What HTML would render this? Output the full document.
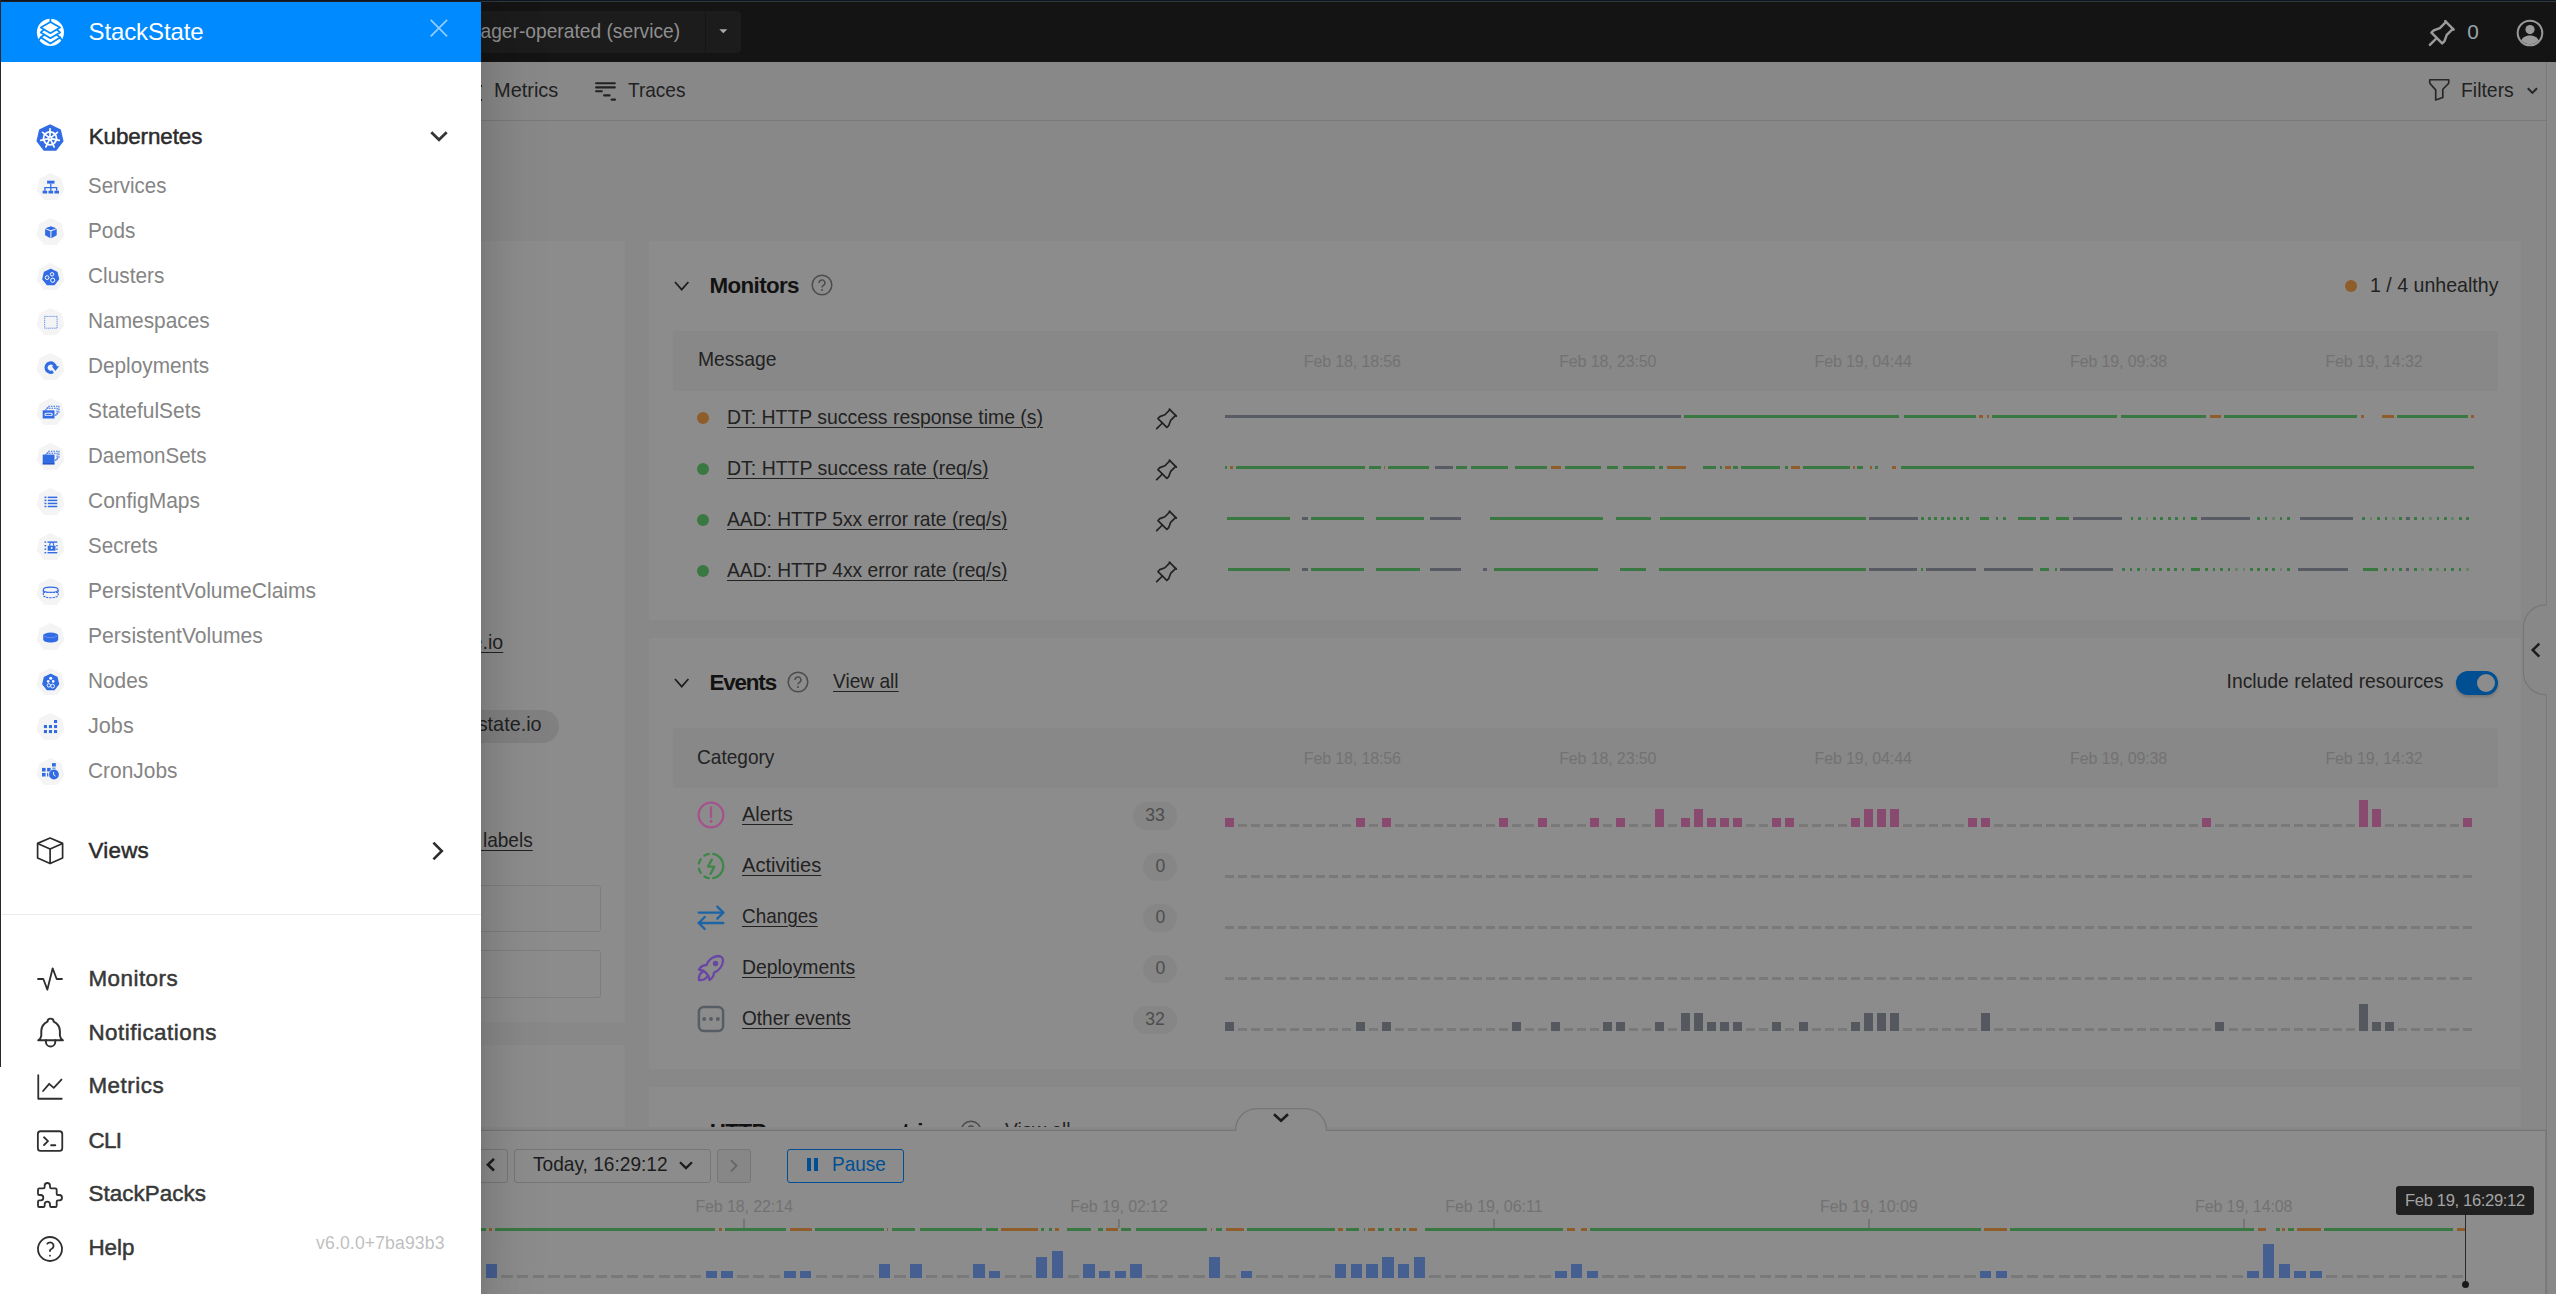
<!DOCTYPE html>
<html lang="en"><head><meta charset="utf-8"><title>StackState</title><style>
html,body{margin:0;padding:0;}
html{overflow:hidden;width:2556px;height:1294px;}
body{width:2556px;height:1294px;overflow:hidden;position:relative;background:#888888;font-family:"Liberation Sans", sans-serif;}
.b{position:absolute;display:block;}
.t{position:absolute;white-space:nowrap;line-height:1;}
.u{text-decoration:underline;text-decoration-thickness:1.6px;text-underline-offset:3px;}
</style></head><body>
<div class="b" style="left:0.00px;top:0.00px;width:2556.00px;height:62.00px;background:#141414;"></div>
<div class="b" style="left:0.00px;top:0.00px;width:2556.00px;height:1.00px;background:#0a1726;"></div>
<div class="b" style="left:0.00px;top:1.00px;width:2556.00px;height:1.00px;background:#363636;"></div>
<div class="b" style="left:300.00px;top:11.00px;width:440.50px;height:42.00px;background:#1c1c1c;border-radius:4px;"></div>
<div class="b" style="left:705.00px;top:11.00px;width:1.00px;height:42.00px;background:#151515;"></div>
<span class="t" style="top:20.99px;font-size:20.8px;color:#8f8f8f;right:1875.50px;transform:scaleX(0.9232);transform-origin:100% 0;">alertmanager-operated (service)</span>
<svg class="b" style="left:718.00px;top:28.20px;" width="12" height="7" viewBox="0 0 12 7"><path d="M1.300 1.200h8l-4 4z" fill="#aaaaaa"/></svg>
<svg class="b" style="left:2422.50px;top:14.60px;" width="36.8" height="36.8" viewBox="0 0 24 24"><g fill="none" stroke="#9b9b9b" stroke-width="1.6" stroke-linecap="round" stroke-linejoin="round"><path d="M15 4.5l-4 4l-4 1.5l-1.5 1.5l7 7l1.5 -1.5l1.5 -4l4 -4"/><path d="M9 15l-4.5 4.5"/><path d="M14.5 4l5.5 5.5"/></g></svg>
<span class="t" style="top:21.79px;font-size:20.8px;color:#9aa3ad;letter-spacing:0.125px;left:2467.30px;">0</span>
<svg class="b" style="left:2515.50px;top:19.00px;" width="28" height="28" viewBox="0 0 28 28"><circle cx="14" cy="14" r="12.3" fill="none" stroke="#9a9a9a" stroke-width="2"/><circle cx="14" cy="10.6" r="4.6" fill="#9a9a9a"/><path d="M5.2 21.6c1.6-3.6 5-5 8.8-5s7.2 1.4 8.8 5a12.3 12.3 0 0 1-17.6 0z" fill="#9a9a9a"/></svg>
<div class="b" style="left:0.00px;top:120.00px;width:2546.00px;height:1.00px;background:#7a7a7a;"></div>
<div class="b" style="left:2546.00px;top:62.00px;width:1.00px;height:1232.00px;background:#797979;"></div>
<span class="t" style="top:79.59px;font-size:20.8px;color:#222222;left:494.10px;transform:scaleX(0.9599);transform-origin:0 0;">Metrics</span>
<div class="b" style="left:481.00px;top:85.00px;width:1.20px;height:2.40px;background:#1c1c1c;"></div>
<div class="b" style="left:481.00px;top:99.00px;width:1.20px;height:2.40px;background:#1c1c1c;"></div>
<svg class="b" style="left:594.00px;top:81.00px;" width="24" height="21" viewBox="0 0 24 21"><g stroke="#222" stroke-width="2.1" stroke-linecap="round" fill="none"><path d="M2.1 2.300H20.800"/><path d="M2.100 6.400H20.800"/><path d="M2.100 10.200H7.800"/><path d="M10.100 14.400H15.600"/><path d="M17.600 18.600H21"/></g></svg>
<span class="t" style="top:79.59px;font-size:20.8px;color:#222222;left:628.30px;transform:scaleX(0.9147);transform-origin:0 0;">Traces</span>
<svg class="b" style="left:2424.60px;top:75.30px;" width="28.5" height="28.5" viewBox="0 0 24 24"><g fill="none" stroke="#262626" stroke-width="1.4" stroke-linejoin="round"><path d="M4 4h16v2.172a2 2 0 0 1 -.586 1.414l-4.414 4.414v7l-6 2v-8.5l-4.644 -5.108a2 2 0 0 1 -.356 -1.142v-2.25z"/></g></svg>
<span class="t" style="top:80.19px;font-size:20.8px;color:#222222;left:2461.40px;transform:scaleX(0.9324);transform-origin:0 0;">Filters</span>
<svg class="b" style="left:2526.00px;top:86.00px;" width="13" height="10" viewBox="0 0 13 10"><path d="M1.8 2.3l4.6 4.6l4.6-4.6" fill="none" stroke="#262626" stroke-width="2"/></svg>
<div class="b" style="left:300.00px;top:241.00px;width:325.00px;height:781.00px;background:#8c8c8c;border-radius:2px;"></div>
<div class="b" style="left:300.00px;top:1045.00px;width:325.00px;height:120.00px;background:#8c8c8c;border-radius:2px;"></div>
<span class="t" style="top:632.49px;font-size:20.8px;color:#222222;right:2052.50px;transform:scaleX(0.9417);transform-origin:100% 0;text-decoration:underline;text-decoration-thickness:1.25px;text-underline-offset:2.6px;">prometheus.stackstate.io</span>
<div class="b" style="left:330.00px;top:710.00px;width:229.00px;height:33.00px;background:#808080;border-radius:17px;"></div>
<span class="t" style="top:714.49px;font-size:20.8px;color:#222222;right:2014.50px;transform:scaleX(0.9527);transform-origin:100% 0;">stackstate.io</span>
<span class="t" style="top:830.49px;font-size:20.8px;color:#222222;right:2023.50px;transform:scaleX(0.9171);transform-origin:100% 0;text-decoration:underline;text-decoration-thickness:1.25px;text-underline-offset:2.6px;">Show all labels</span>
<div class="b" style="left:300.00px;top:884.50px;width:300.50px;height:47.00px;border:1px solid #7e7e7e;border-radius:3px;box-sizing:border-box;"></div>
<div class="b" style="left:300.00px;top:950.00px;width:300.50px;height:47.50px;border:1px solid #7e7e7e;border-radius:3px;box-sizing:border-box;"></div>
<div class="b" style="left:649.30px;top:241.00px;width:1872.20px;height:379.00px;background:#8c8c8c;border-radius:2px;"></div>
<div class="b" style="left:649.30px;top:638.00px;width:1872.20px;height:431.00px;background:#8c8c8c;border-radius:2px;"></div>
<div class="b" style="left:649.30px;top:1087.00px;width:1872.20px;height:80.00px;background:#8c8c8c;border-radius:2px;"></div>
<svg class="b" style="left:674.00px;top:281.00px;" width="16" height="11" viewBox="0 0 16 11"><path d="M1 1l6.7 7.6l6.7-7.6" fill="none" stroke="#1c1c1c" stroke-width="1.7"/></svg>
<span class="t" style="top:275.44px;font-size:22.4px;color:#121212;font-weight:700;letter-spacing:-0.641px;left:709.50px;">Monitors</span>
<svg class="b" style="left:811.00px;top:274.00px;" width="22" height="22" viewBox="0 0 22 22"><circle cx="11" cy="11" r="9.8" fill="none" stroke="#4c4c4c" stroke-width="1.5"/><path d="M8.1 8.9a2.9 2.9 0 1 1 4.3 2.5c-1 .6-1.4 1.1-1.4 2.1" fill="none" stroke="#4c4c4c" stroke-width="1.5"/><circle cx="11" cy="15.9" r="1" fill="#4c4c4c"/></svg>
<div class="b" style="left:2344.90px;top:279.90px;width:12.20px;height:12.20px;background:#8e5d29;border-radius:50%;"></div>
<span class="t" style="top:274.99px;font-size:20.8px;color:#222222;right:58.00px;transform:scaleX(0.9417);transform-origin:100% 0;">1 / 4 unhealthy</span>
<div class="b" style="left:673.00px;top:331.00px;width:1825.00px;height:59.50px;background:#888888;border-radius:3px;"></div>
<span class="t" style="top:349.49px;font-size:20.8px;color:#222222;left:697.50px;transform:scaleX(0.9290);transform-origin:0 0;">Message</span>
<span class="t" style="top:354.26px;font-size:16px;color:#727272;letter-spacing:-0.127px;left:1303.80px;">Feb 18, 18:56</span>
<span class="t" style="top:354.26px;font-size:16px;color:#727272;letter-spacing:-0.127px;left:1559.20px;">Feb 18, 23:50</span>
<span class="t" style="top:354.26px;font-size:16px;color:#727272;letter-spacing:-0.127px;left:1814.60px;">Feb 19, 04:44</span>
<span class="t" style="top:354.26px;font-size:16px;color:#727272;letter-spacing:-0.127px;left:2070.00px;">Feb 19, 09:38</span>
<span class="t" style="top:354.26px;font-size:16px;color:#727272;letter-spacing:-0.127px;left:2325.40px;">Feb 19, 14:32</span>
<div class="b" style="left:696.80px;top:411.80px;width:12.30px;height:12.30px;background:#8e5d29;border-radius:50%;"></div>
<span class="t" style="top:406.99px;font-size:20.8px;color:#222222;left:727.20px;transform:scaleX(0.9343);transform-origin:0 0;text-decoration:underline;text-decoration-thickness:1.25px;text-underline-offset:2.6px;">DT: HTTP success response time (s)</span>
<svg class="b" style="left:1150.90px;top:404.20px;" width="30.4" height="30.4" viewBox="0 0 24 24"><g fill="none" stroke="#222" stroke-width="1.35" stroke-linecap="round" stroke-linejoin="round"><path d="M15 4.5l-4 4l-4 1.5l-1.5 1.5l7 7l1.5 -1.5l1.5 -4l4 -4"/><path d="M9 15l-4.5 4.5"/><path d="M14.5 4l5.5 5.5"/></g></svg>
<div class="b" style="left:696.80px;top:462.80px;width:12.30px;height:12.30px;background:#3a7841;border-radius:50%;"></div>
<span class="t" style="top:457.99px;font-size:20.8px;color:#222222;left:727.20px;transform:scaleX(0.9367);transform-origin:0 0;text-decoration:underline;text-decoration-thickness:1.25px;text-underline-offset:2.6px;">DT: HTTP success rate (req/s)</span>
<svg class="b" style="left:1150.90px;top:455.20px;" width="30.4" height="30.4" viewBox="0 0 24 24"><g fill="none" stroke="#222" stroke-width="1.35" stroke-linecap="round" stroke-linejoin="round"><path d="M15 4.5l-4 4l-4 1.5l-1.5 1.5l7 7l1.5 -1.5l1.5 -4l4 -4"/><path d="M9 15l-4.5 4.5"/><path d="M14.5 4l5.5 5.5"/></g></svg>
<div class="b" style="left:696.80px;top:513.80px;width:12.30px;height:12.30px;background:#3a7841;border-radius:50%;"></div>
<span class="t" style="top:508.99px;font-size:20.8px;color:#222222;left:727.20px;transform:scaleX(0.9237);transform-origin:0 0;text-decoration:underline;text-decoration-thickness:1.25px;text-underline-offset:2.6px;">AAD: HTTP 5xx error rate (req/s)</span>
<svg class="b" style="left:1150.90px;top:506.20px;" width="30.4" height="30.4" viewBox="0 0 24 24"><g fill="none" stroke="#222" stroke-width="1.35" stroke-linecap="round" stroke-linejoin="round"><path d="M15 4.5l-4 4l-4 1.5l-1.5 1.5l7 7l1.5 -1.5l1.5 -4l4 -4"/><path d="M9 15l-4.5 4.5"/><path d="M14.5 4l5.5 5.5"/></g></svg>
<div class="b" style="left:696.80px;top:564.80px;width:12.30px;height:12.30px;background:#3a7841;border-radius:50%;"></div>
<span class="t" style="top:559.99px;font-size:20.8px;color:#222222;left:727.20px;transform:scaleX(0.9237);transform-origin:0 0;text-decoration:underline;text-decoration-thickness:1.25px;text-underline-offset:2.6px;">AAD: HTTP 4xx error rate (req/s)</span>
<svg class="b" style="left:1150.90px;top:557.20px;" width="30.4" height="30.4" viewBox="0 0 24 24"><g fill="none" stroke="#222" stroke-width="1.35" stroke-linecap="round" stroke-linejoin="round"><path d="M15 4.5l-4 4l-4 1.5l-1.5 1.5l7 7l1.5 -1.5l1.5 -4l4 -4"/><path d="M9 15l-4.5 4.5"/><path d="M14.5 4l5.5 5.5"/></g></svg>
<div class="b" style="left:1225.00px;top:415.00px;width:456.10px;height:3.00px;background:#585b64;"></div>
<div class="b" style="left:1684.40px;top:415.00px;width:214.60px;height:3.00px;background:#3a7841;"></div>
<div class="b" style="left:1903.80px;top:415.00px;width:72.40px;height:3.00px;background:#3a7841;"></div>
<div class="b" style="left:1979.30px;top:415.00px;width:3.40px;height:3.00px;background:#8e5d29;"></div>
<div class="b" style="left:1987.10px;top:415.00px;width:2.30px;height:3.00px;background:#8e5d29;"></div>
<div class="b" style="left:1992.40px;top:415.00px;width:124.30px;height:3.00px;background:#3a7841;"></div>
<div class="b" style="left:2121.20px;top:415.00px;width:85.20px;height:3.00px;background:#3a7841;"></div>
<div class="b" style="left:2209.60px;top:415.00px;width:11.40px;height:3.00px;background:#8e5d29;"></div>
<div class="b" style="left:2224.20px;top:415.00px;width:133.30px;height:3.00px;background:#3a7841;"></div>
<div class="b" style="left:2360.70px;top:415.00px;width:3.20px;height:3.00px;background:#8e5d29;"></div>
<div class="b" style="left:2382.20px;top:415.00px;width:12.00px;height:3.00px;background:#8e5d29;"></div>
<div class="b" style="left:2397.40px;top:415.00px;width:70.20px;height:3.00px;background:#3a7841;"></div>
<div class="b" style="left:2470.60px;top:415.00px;width:3.20px;height:3.00px;background:#8e5d29;"></div>
<div class="b" style="left:1225.30px;top:466.00px;width:1.80px;height:3.00px;background:#3a7841;"></div>
<div class="b" style="left:1229.80px;top:466.00px;width:3.50px;height:3.00px;background:#8e5d29;"></div>
<div class="b" style="left:1236.20px;top:466.00px;width:128.70px;height:3.00px;background:#3a7841;"></div>
<div class="b" style="left:1369.20px;top:466.00px;width:12.00px;height:3.00px;background:#3a7841;"></div>
<div class="b" style="left:1384.40px;top:466.00px;width:1.00px;height:3.00px;background:#8e5d29;"></div>
<div class="b" style="left:1388.40px;top:466.00px;width:40.70px;height:3.00px;background:#3a7841;"></div>
<div class="b" style="left:1434.90px;top:466.00px;width:17.80px;height:3.00px;background:#585b64;"></div>
<div class="b" style="left:1455.90px;top:466.00px;width:11.50px;height:3.00px;background:#3a7841;"></div>
<div class="b" style="left:1471.40px;top:466.00px;width:36.70px;height:3.00px;background:#3a7841;"></div>
<div class="b" style="left:1514.70px;top:466.00px;width:32.80px;height:3.00px;background:#3a7841;"></div>
<div class="b" style="left:1550.60px;top:466.00px;width:10.70px;height:3.00px;background:#8e5d29;"></div>
<div class="b" style="left:1564.50px;top:466.00px;width:36.40px;height:3.00px;background:#3a7841;"></div>
<div class="b" style="left:1606.80px;top:466.00px;width:11.40px;height:3.00px;background:#3a7841;"></div>
<div class="b" style="left:1622.70px;top:466.00px;width:32.20px;height:3.00px;background:#3a7841;"></div>
<div class="b" style="left:1658.90px;top:466.00px;width:4.50px;height:3.00px;background:#3a7841;"></div>
<div class="b" style="left:1666.60px;top:466.00px;width:19.70px;height:3.00px;background:#8e5d29;"></div>
<div class="b" style="left:1702.80px;top:466.00px;width:12.80px;height:3.00px;background:#3a7841;"></div>
<div class="b" style="left:1720.10px;top:466.00px;width:1.90px;height:3.00px;background:#3a7841;"></div>
<div class="b" style="left:1724.60px;top:466.00px;width:6.20px;height:3.00px;background:#8e5d29;"></div>
<div class="b" style="left:1733.40px;top:466.00px;width:4.50px;height:3.00px;background:#3a7841;"></div>
<div class="b" style="left:1741.40px;top:466.00px;width:38.60px;height:3.00px;background:#3a7841;"></div>
<div class="b" style="left:1785.30px;top:466.00px;width:2.70px;height:3.00px;background:#3a7841;"></div>
<div class="b" style="left:1790.90px;top:466.00px;width:9.00px;height:3.00px;background:#8e5d29;"></div>
<div class="b" style="left:1803.10px;top:466.00px;width:47.40px;height:3.00px;background:#3a7841;"></div>
<div class="b" style="left:1853.10px;top:466.00px;width:1.90px;height:3.00px;background:#8e5d29;"></div>
<div class="b" style="left:1857.10px;top:466.00px;width:6.40px;height:3.00px;background:#3a7841;"></div>
<div class="b" style="left:1869.50px;top:466.00px;width:2.80px;height:3.00px;background:#8e5d29;"></div>
<div class="b" style="left:1875.20px;top:466.00px;width:2.40px;height:3.00px;background:#3a7841;"></div>
<div class="b" style="left:1891.90px;top:466.00px;width:4.00px;height:3.00px;background:#8e5d29;"></div>
<div class="b" style="left:1900.70px;top:466.00px;width:573.10px;height:3.00px;background:#3a7841;"></div>
<div class="b" style="left:1226.60px;top:517.00px;width:63.10px;height:3.00px;background:#3a7841;"></div>
<div class="b" style="left:1302.40px;top:517.00px;width:5.30px;height:3.00px;background:#585b64;"></div>
<div class="b" style="left:1310.90px;top:517.00px;width:52.70px;height:3.00px;background:#3a7841;"></div>
<div class="b" style="left:1375.90px;top:517.00px;width:48.60px;height:3.00px;background:#3a7841;"></div>
<div class="b" style="left:1429.60px;top:517.00px;width:31.10px;height:3.00px;background:#585b64;"></div>
<div class="b" style="left:1489.50px;top:517.00px;width:113.60px;height:3.00px;background:#3a7841;"></div>
<div class="b" style="left:1616.40px;top:517.00px;width:34.50px;height:3.00px;background:#3a7841;"></div>
<div class="b" style="left:1660.30px;top:517.00px;width:205.60px;height:3.00px;background:#3a7841;"></div>
<div class="b" style="left:1869.20px;top:517.00px;width:48.80px;height:3.00px;background:#585b64;"></div>
<div class="b" style="left:1980.30px;top:517.00px;width:8.70px;height:3.00px;background:#3a7841;"></div>
<div class="b" style="left:2017.80px;top:517.00px;width:17.80px;height:3.00px;background:#3a7841;"></div>
<div class="b" style="left:2040.40px;top:517.00px;width:9.00px;height:3.00px;background:#3a7841;"></div>
<div class="b" style="left:2055.50px;top:517.00px;width:13.90px;height:3.00px;background:#3a7841;"></div>
<div class="b" style="left:2072.80px;top:517.00px;width:49.30px;height:3.00px;background:#585b64;"></div>
<div class="b" style="left:2191.20px;top:517.00px;width:6.10px;height:3.00px;background:#3a7841;"></div>
<div class="b" style="left:2200.50px;top:517.00px;width:49.30px;height:3.00px;background:#585b64;"></div>
<div class="b" style="left:2299.50px;top:517.00px;width:53.20px;height:3.00px;background:#585b64;"></div>
<div class="b" style="left:1921.20px;top:517.00px;width:3.00px;height:3.00px;background:#3a7841;"></div>
<div class="b" style="left:1927.65px;top:517.00px;width:3.00px;height:3.00px;background:#3a7841;"></div>
<div class="b" style="left:1934.10px;top:517.00px;width:3.00px;height:3.00px;background:#3a7841;"></div>
<div class="b" style="left:1940.55px;top:517.00px;width:3.00px;height:3.00px;background:#3a7841;"></div>
<div class="b" style="left:1947.00px;top:517.00px;width:3.00px;height:3.00px;background:#3a7841;"></div>
<div class="b" style="left:1953.45px;top:517.00px;width:3.00px;height:3.00px;background:#3a7841;"></div>
<div class="b" style="left:1959.90px;top:517.00px;width:3.00px;height:3.00px;background:#3a7841;"></div>
<div class="b" style="left:1966.35px;top:517.00px;width:3.00px;height:3.00px;background:#3a7841;"></div>
<div class="b" style="left:1995.70px;top:517.00px;width:2.60px;height:3.00px;background:#3a7841;"></div>
<div class="b" style="left:2003.30px;top:517.00px;width:2.60px;height:3.00px;background:#3a7841;"></div>
<div class="b" style="left:2130.60px;top:517.00px;width:2.70px;height:3.00px;background:#3a7841;"></div>
<div class="b" style="left:2138.05px;top:517.00px;width:2.70px;height:3.00px;background:#3a7841;"></div>
<div class="b" style="left:2145.50px;top:517.00px;width:2.70px;height:3.00px;background:#3a7841;opacity:.45;"></div>
<div class="b" style="left:2152.95px;top:517.00px;width:2.70px;height:3.00px;background:#3a7841;"></div>
<div class="b" style="left:2160.40px;top:517.00px;width:2.70px;height:3.00px;background:#3a7841;"></div>
<div class="b" style="left:2167.85px;top:517.00px;width:2.70px;height:3.00px;background:#3a7841;"></div>
<div class="b" style="left:2175.30px;top:517.00px;width:2.70px;height:3.00px;background:#3a7841;"></div>
<div class="b" style="left:2182.75px;top:517.00px;width:2.70px;height:3.00px;background:#3a7841;"></div>
<div class="b" style="left:2257.20px;top:517.00px;width:2.70px;height:3.00px;background:#3a7841;"></div>
<div class="b" style="left:2264.65px;top:517.00px;width:2.70px;height:3.00px;background:#3a7841;"></div>
<div class="b" style="left:2272.10px;top:517.00px;width:2.70px;height:3.00px;background:#3a7841;opacity:.45;"></div>
<div class="b" style="left:2279.55px;top:517.00px;width:2.70px;height:3.00px;background:#3a7841;"></div>
<div class="b" style="left:2287.00px;top:517.00px;width:2.70px;height:3.00px;background:#3a7841;"></div>
<div class="b" style="left:2362.30px;top:517.00px;width:2.70px;height:3.00px;background:#3a7841;"></div>
<div class="b" style="left:2369.73px;top:517.00px;width:2.70px;height:3.00px;background:#3a7841;opacity:.45;"></div>
<div class="b" style="left:2377.16px;top:517.00px;width:2.70px;height:3.00px;background:#3a7841;"></div>
<div class="b" style="left:2384.59px;top:517.00px;width:2.70px;height:3.00px;background:#3a7841;"></div>
<div class="b" style="left:2392.02px;top:517.00px;width:2.70px;height:3.00px;background:#3a7841;opacity:.45;"></div>
<div class="b" style="left:2399.45px;top:517.00px;width:2.70px;height:3.00px;background:#3a7841;"></div>
<div class="b" style="left:2406.88px;top:517.00px;width:2.70px;height:3.00px;background:#3a7841;"></div>
<div class="b" style="left:2414.31px;top:517.00px;width:2.70px;height:3.00px;background:#3a7841;"></div>
<div class="b" style="left:2421.74px;top:517.00px;width:2.70px;height:3.00px;background:#3a7841;"></div>
<div class="b" style="left:2429.17px;top:517.00px;width:2.70px;height:3.00px;background:#3a7841;opacity:.45;"></div>
<div class="b" style="left:2436.60px;top:517.00px;width:2.70px;height:3.00px;background:#3a7841;"></div>
<div class="b" style="left:2444.03px;top:517.00px;width:2.70px;height:3.00px;background:#3a7841;"></div>
<div class="b" style="left:2451.46px;top:517.00px;width:2.70px;height:3.00px;background:#3a7841;opacity:.45;"></div>
<div class="b" style="left:2458.89px;top:517.00px;width:2.70px;height:3.00px;background:#3a7841;"></div>
<div class="b" style="left:2466.32px;top:517.00px;width:2.70px;height:3.00px;background:#3a7841;"></div>
<div class="b" style="left:2406.30px;top:517.00px;width:2.80px;height:3.00px;background:#585b64;"></div>
<div class="b" style="left:1227.90px;top:568.00px;width:61.80px;height:3.00px;background:#3a7841;"></div>
<div class="b" style="left:1302.40px;top:568.00px;width:5.30px;height:3.00px;background:#585b64;"></div>
<div class="b" style="left:1310.90px;top:568.00px;width:52.70px;height:3.00px;background:#3a7841;"></div>
<div class="b" style="left:1375.90px;top:568.00px;width:44.10px;height:3.00px;background:#3a7841;"></div>
<div class="b" style="left:1429.60px;top:568.00px;width:31.10px;height:3.00px;background:#585b64;"></div>
<div class="b" style="left:1482.80px;top:568.00px;width:4.00px;height:3.00px;background:#585b64;"></div>
<div class="b" style="left:1494.20px;top:568.00px;width:104.30px;height:3.00px;background:#3a7841;"></div>
<div class="b" style="left:1619.80px;top:568.00px;width:25.80px;height:3.00px;background:#3a7841;"></div>
<div class="b" style="left:1658.90px;top:568.00px;width:207.00px;height:3.00px;background:#3a7841;"></div>
<div class="b" style="left:1869.20px;top:568.00px;width:48.30px;height:3.00px;background:#585b64;"></div>
<div class="b" style="left:1920.70px;top:568.00px;width:2.30px;height:3.00px;background:#3a7841;"></div>
<div class="b" style="left:1925.70px;top:568.00px;width:50.00px;height:3.00px;background:#585b64;"></div>
<div class="b" style="left:1983.70px;top:568.00px;width:49.20px;height:3.00px;background:#585b64;"></div>
<div class="b" style="left:2040.40px;top:568.00px;width:9.00px;height:3.00px;background:#3a7841;"></div>
<div class="b" style="left:2055.00px;top:568.00px;width:1.90px;height:3.00px;background:#3a7841;"></div>
<div class="b" style="left:2060.00px;top:568.00px;width:52.70px;height:3.00px;background:#585b64;"></div>
<div class="b" style="left:2190.70px;top:568.00px;width:9.80px;height:3.00px;background:#3a7841;"></div>
<div class="b" style="left:2298.40px;top:568.00px;width:49.30px;height:3.00px;background:#585b64;"></div>
<div class="b" style="left:2362.80px;top:568.00px;width:15.50px;height:3.00px;background:#3a7841;"></div>
<div class="b" style="left:2122.20px;top:568.00px;width:2.70px;height:3.00px;background:#3a7841;"></div>
<div class="b" style="left:2129.65px;top:568.00px;width:2.70px;height:3.00px;background:#3a7841;"></div>
<div class="b" style="left:2137.10px;top:568.00px;width:2.70px;height:3.00px;background:#3a7841;"></div>
<div class="b" style="left:2144.55px;top:568.00px;width:2.70px;height:3.00px;background:#3a7841;opacity:.45;"></div>
<div class="b" style="left:2152.00px;top:568.00px;width:2.70px;height:3.00px;background:#3a7841;"></div>
<div class="b" style="left:2159.45px;top:568.00px;width:2.70px;height:3.00px;background:#3a7841;"></div>
<div class="b" style="left:2166.90px;top:568.00px;width:2.70px;height:3.00px;background:#3a7841;"></div>
<div class="b" style="left:2174.35px;top:568.00px;width:2.70px;height:3.00px;background:#3a7841;"></div>
<div class="b" style="left:2181.80px;top:568.00px;width:2.70px;height:3.00px;background:#3a7841;"></div>
<div class="b" style="left:2205.30px;top:568.00px;width:2.70px;height:3.00px;background:#3a7841;"></div>
<div class="b" style="left:2212.75px;top:568.00px;width:2.70px;height:3.00px;background:#3a7841;"></div>
<div class="b" style="left:2220.20px;top:568.00px;width:2.70px;height:3.00px;background:#3a7841;"></div>
<div class="b" style="left:2227.65px;top:568.00px;width:2.70px;height:3.00px;background:#3a7841;"></div>
<div class="b" style="left:2235.10px;top:568.00px;width:2.70px;height:3.00px;background:#3a7841;opacity:.45;"></div>
<div class="b" style="left:2242.55px;top:568.00px;width:2.70px;height:3.00px;background:#3a7841;opacity:.45;"></div>
<div class="b" style="left:2250.00px;top:568.00px;width:2.70px;height:3.00px;background:#3a7841;"></div>
<div class="b" style="left:2257.45px;top:568.00px;width:2.70px;height:3.00px;background:#3a7841;"></div>
<div class="b" style="left:2264.90px;top:568.00px;width:2.70px;height:3.00px;background:#3a7841;"></div>
<div class="b" style="left:2272.35px;top:568.00px;width:2.70px;height:3.00px;background:#3a7841;"></div>
<div class="b" style="left:2279.80px;top:568.00px;width:2.70px;height:3.00px;background:#3a7841;opacity:.45;"></div>
<div class="b" style="left:2287.25px;top:568.00px;width:2.70px;height:3.00px;background:#3a7841;"></div>
<div class="b" style="left:2384.20px;top:568.00px;width:2.70px;height:3.00px;background:#3a7841;"></div>
<div class="b" style="left:2391.65px;top:568.00px;width:2.70px;height:3.00px;background:#3a7841;"></div>
<div class="b" style="left:2399.10px;top:568.00px;width:2.70px;height:3.00px;background:#3a7841;"></div>
<div class="b" style="left:2406.55px;top:568.00px;width:2.70px;height:3.00px;background:#3a7841;"></div>
<div class="b" style="left:2414.00px;top:568.00px;width:2.70px;height:3.00px;background:#3a7841;"></div>
<div class="b" style="left:2421.45px;top:568.00px;width:2.70px;height:3.00px;background:#3a7841;opacity:.45;"></div>
<div class="b" style="left:2428.90px;top:568.00px;width:2.70px;height:3.00px;background:#3a7841;"></div>
<div class="b" style="left:2436.35px;top:568.00px;width:2.70px;height:3.00px;background:#3a7841;opacity:.45;"></div>
<div class="b" style="left:2443.80px;top:568.00px;width:2.70px;height:3.00px;background:#3a7841;"></div>
<div class="b" style="left:2451.25px;top:568.00px;width:2.70px;height:3.00px;background:#3a7841;"></div>
<div class="b" style="left:2458.70px;top:568.00px;width:2.70px;height:3.00px;background:#3a7841;"></div>
<div class="b" style="left:2466.15px;top:568.00px;width:2.70px;height:3.00px;background:#3a7841;opacity:.45;"></div>
<div class="b" style="left:2406.30px;top:568.00px;width:2.80px;height:3.00px;background:#585b64;"></div>
<svg class="b" style="left:674.00px;top:678.00px;" width="16" height="11" viewBox="0 0 16 11"><path d="M1 1l6.7 7.6l6.7-7.6" fill="none" stroke="#1c1c1c" stroke-width="1.7"/></svg>
<span class="t" style="top:672.44px;font-size:22.4px;color:#121212;font-weight:700;letter-spacing:-1.140px;left:709.40px;">Events</span>
<svg class="b" style="left:787.00px;top:671.00px;" width="22" height="22" viewBox="0 0 22 22"><circle cx="11" cy="11" r="9.8" fill="none" stroke="#4c4c4c" stroke-width="1.5"/><path d="M8.1 8.9a2.9 2.9 0 1 1 4.3 2.5c-1 .6-1.4 1.1-1.4 2.1" fill="none" stroke="#4c4c4c" stroke-width="1.5"/><circle cx="11" cy="15.9" r="1" fill="#4c4c4c"/></svg>
<span class="t" style="top:671.19px;font-size:20.8px;color:#222222;left:833.30px;transform:scaleX(0.9201);transform-origin:0 0;text-decoration:underline;text-decoration-thickness:1.25px;text-underline-offset:2.6px;">View all</span>
<span class="t" style="top:671.19px;font-size:20.8px;color:#222222;right:112.70px;transform:scaleX(0.9292);transform-origin:100% 0;">Include related resources</span>
<div class="b" style="left:2456.00px;top:670.70px;width:42.00px;height:24.40px;background:#004f93;border-radius:13px;box-shadow:0 2px 3px rgba(0,0,0,.18);"></div>
<div class="b" style="left:2477.10px;top:673.90px;width:18.00px;height:18.00px;background:#8c8c8c;border-radius:50%;"></div>
<div class="b" style="left:673.00px;top:728.00px;width:1825.00px;height:59.50px;background:#888888;border-radius:3px;"></div>
<span class="t" style="top:746.99px;font-size:20.8px;color:#222222;left:697.30px;transform:scaleX(0.9172);transform-origin:0 0;">Category</span>
<span class="t" style="top:751.06px;font-size:16px;color:#727272;letter-spacing:-0.127px;left:1303.80px;">Feb 18, 18:56</span>
<span class="t" style="top:751.06px;font-size:16px;color:#727272;letter-spacing:-0.127px;left:1559.20px;">Feb 18, 23:50</span>
<span class="t" style="top:751.06px;font-size:16px;color:#727272;letter-spacing:-0.127px;left:1814.60px;">Feb 19, 04:44</span>
<span class="t" style="top:751.06px;font-size:16px;color:#727272;letter-spacing:-0.127px;left:2070.00px;">Feb 19, 09:38</span>
<span class="t" style="top:751.06px;font-size:16px;color:#727272;letter-spacing:-0.127px;left:2325.40px;">Feb 19, 14:32</span>
<span class="t" style="top:803.79px;font-size:20.8px;color:#222222;left:742.20px;transform:scaleX(0.9554);transform-origin:0 0;text-decoration:underline;text-decoration-thickness:1.25px;text-underline-offset:2.6px;">Alerts</span>
<div class="b" style="left:1133.00px;top:802.00px;width:44.00px;height:27.60px;background:#868686;border-radius:14px;"></div>
<span class="t" style="top:807.20px;font-size:17.6px;color:#4d4d4d;letter-spacing:-0.189px;left:1145.30px;">33</span>
<span class="t" style="top:854.79px;font-size:20.8px;color:#222222;left:742.20px;transform:scaleX(0.9663);transform-origin:0 0;text-decoration:underline;text-decoration-thickness:1.25px;text-underline-offset:2.6px;">Activities</span>
<div class="b" style="left:1143.00px;top:853.00px;width:34.00px;height:27.60px;background:#868686;border-radius:14px;"></div>
<span class="t" style="top:858.20px;font-size:17.6px;color:#4d4d4d;letter-spacing:0.094px;left:1155.60px;">0</span>
<span class="t" style="top:905.79px;font-size:20.8px;color:#222222;left:742.20px;transform:scaleX(0.9081);transform-origin:0 0;text-decoration:underline;text-decoration-thickness:1.25px;text-underline-offset:2.6px;">Changes</span>
<div class="b" style="left:1143.00px;top:904.00px;width:34.00px;height:27.60px;background:#868686;border-radius:14px;"></div>
<span class="t" style="top:909.20px;font-size:17.6px;color:#4d4d4d;letter-spacing:0.094px;left:1155.60px;">0</span>
<span class="t" style="top:956.79px;font-size:20.8px;color:#222222;left:742.20px;transform:scaleX(0.9318);transform-origin:0 0;text-decoration:underline;text-decoration-thickness:1.25px;text-underline-offset:2.6px;">Deployments</span>
<div class="b" style="left:1143.00px;top:955.00px;width:34.00px;height:27.60px;background:#868686;border-radius:14px;"></div>
<span class="t" style="top:960.20px;font-size:17.6px;color:#4d4d4d;letter-spacing:0.094px;left:1155.60px;">0</span>
<span class="t" style="top:1007.79px;font-size:20.8px;color:#222222;left:742.20px;transform:scaleX(0.9137);transform-origin:0 0;text-decoration:underline;text-decoration-thickness:1.25px;text-underline-offset:2.6px;">Other events</span>
<div class="b" style="left:1133.00px;top:1006.00px;width:44.00px;height:27.60px;background:#868686;border-radius:14px;"></div>
<span class="t" style="top:1011.20px;font-size:17.6px;color:#4d4d4d;letter-spacing:-0.189px;left:1145.30px;">32</span>
<svg class="b" style="left:690.50px;top:795.40px;" width="40" height="40" viewBox="-20 -20 40 40"><g fill="none" stroke="#a5528c" stroke-width="2.3" stroke-linecap="round" stroke-linejoin="round"><circle cx="0" cy="0" r="12.35"/><path d="M0 -7.6v9.6"/><path d="M0 6.3v.2" stroke-width="2.9"/></g></svg>
<svg class="b" style="left:690.50px;top:846.40px;" width="40" height="40" viewBox="-20 -20 40 40"><g fill="none" stroke="#3e8746" stroke-width="2.3" stroke-linecap="round" stroke-linejoin="round"><path d="M2.14 -12.16A12.35 12.35 0 0 1 2.14 12.16"/><path d="M-2.14 12.16A12.35 12.35 0 0 1 -6.54 10.47"/><path d="M-10.24 6.91A12.35 12.35 0 0 1 -12.08 2.57"/><path d="M-12.08 -2.57A12.35 12.35 0 0 1 -10.24 -6.91"/><path d="M-6.54 -10.47A12.35 12.35 0 0 1 -2.14 -12.16"/><path d="M0.800 -6.400l-3.800 7h6.300l-3.800 7.300"/></g></svg>
<svg class="b" style="left:690.50px;top:897.40px;" width="40" height="40" viewBox="-20 -20 40 40"><g fill="none" stroke="#1c64a5" stroke-width="2.3" stroke-linecap="round" stroke-linejoin="round"><path d="M-12.300 -4.400h24.600"/><path d="M6.300 -10.400l6 6l-6 6"/><path d="M12.300 6h-24.600"/><path d="M-6.300 0l-6 6l6 6"/></g></svg>
<svg class="b" style="left:690.50px;top:948.40px;" width="40" height="40" viewBox="-20 -20 40 40"><g fill="none" stroke="#6946a5" stroke-width="2.3" stroke-linecap="round" stroke-linejoin="round"><g transform="scale(1.5) translate(-12 -12)" stroke-width="1.53"><path d="M4 13a8 8 0 0 1 7 7a6 6 0 0 0 3 -5a9 9 0 0 0 6 -8a3 3 0 0 0 -3 -3a9 9 0 0 0 -8 6a6 6 0 0 0 -5 3"/><path d="M7 14a6 6 0 0 0 -3 6a6 6 0 0 0 6 -3"/><circle cx="15" cy="9" r="1" fill="#6946a5"/></g></g></svg>
<svg class="b" style="left:690.50px;top:999.40px;" width="40" height="40" viewBox="-20 -20 40 40"><g fill="none" stroke="#585c64" stroke-width="2.5" stroke-linecap="round" stroke-linejoin="round"><rect x="-12.100" y="-12.100" width="24.200" height="24.200" rx="5"/><g fill="#585c64" stroke="none"><circle cx="-6.800" cy="0" r="1.950"/><circle cx="0" cy="0" r="1.950"/><circle cx="6.800" cy="0" r="1.950"/></g></g></svg>
<div class="b" style="left:1225.20px;top:818.00px;width:9.00px;height:9.00px;background:#884a6e;"></div>
<div class="b" style="left:1238.23px;top:824.00px;width:9.00px;height:3.00px;background:#797979;"></div>
<div class="b" style="left:1251.26px;top:824.00px;width:9.00px;height:3.00px;background:#797979;"></div>
<div class="b" style="left:1264.29px;top:824.00px;width:9.00px;height:3.00px;background:#797979;"></div>
<div class="b" style="left:1277.32px;top:824.00px;width:9.00px;height:3.00px;background:#797979;"></div>
<div class="b" style="left:1290.35px;top:824.00px;width:9.00px;height:3.00px;background:#797979;"></div>
<div class="b" style="left:1303.38px;top:824.00px;width:9.00px;height:3.00px;background:#797979;"></div>
<div class="b" style="left:1316.41px;top:824.00px;width:9.00px;height:3.00px;background:#797979;"></div>
<div class="b" style="left:1329.44px;top:824.00px;width:9.00px;height:3.00px;background:#797979;"></div>
<div class="b" style="left:1342.47px;top:824.00px;width:9.00px;height:3.00px;background:#797979;"></div>
<div class="b" style="left:1355.50px;top:818.00px;width:9.00px;height:9.00px;background:#884a6e;"></div>
<div class="b" style="left:1368.53px;top:824.00px;width:9.00px;height:3.00px;background:#797979;"></div>
<div class="b" style="left:1381.56px;top:818.00px;width:9.00px;height:9.00px;background:#884a6e;"></div>
<div class="b" style="left:1394.59px;top:824.00px;width:9.00px;height:3.00px;background:#797979;"></div>
<div class="b" style="left:1407.62px;top:824.00px;width:9.00px;height:3.00px;background:#797979;"></div>
<div class="b" style="left:1420.65px;top:824.00px;width:9.00px;height:3.00px;background:#797979;"></div>
<div class="b" style="left:1433.68px;top:824.00px;width:9.00px;height:3.00px;background:#797979;"></div>
<div class="b" style="left:1446.71px;top:824.00px;width:9.00px;height:3.00px;background:#797979;"></div>
<div class="b" style="left:1459.74px;top:824.00px;width:9.00px;height:3.00px;background:#797979;"></div>
<div class="b" style="left:1472.77px;top:824.00px;width:9.00px;height:3.00px;background:#797979;"></div>
<div class="b" style="left:1485.80px;top:824.00px;width:9.00px;height:3.00px;background:#797979;"></div>
<div class="b" style="left:1498.83px;top:818.00px;width:9.00px;height:9.00px;background:#884a6e;"></div>
<div class="b" style="left:1511.86px;top:824.00px;width:9.00px;height:3.00px;background:#797979;"></div>
<div class="b" style="left:1524.89px;top:824.00px;width:9.00px;height:3.00px;background:#797979;"></div>
<div class="b" style="left:1537.92px;top:818.00px;width:9.00px;height:9.00px;background:#884a6e;"></div>
<div class="b" style="left:1550.95px;top:824.00px;width:9.00px;height:3.00px;background:#797979;"></div>
<div class="b" style="left:1563.98px;top:824.00px;width:9.00px;height:3.00px;background:#797979;"></div>
<div class="b" style="left:1577.01px;top:824.00px;width:9.00px;height:3.00px;background:#797979;"></div>
<div class="b" style="left:1590.04px;top:818.00px;width:9.00px;height:9.00px;background:#884a6e;"></div>
<div class="b" style="left:1603.07px;top:824.00px;width:9.00px;height:3.00px;background:#797979;"></div>
<div class="b" style="left:1616.10px;top:818.00px;width:9.00px;height:9.00px;background:#884a6e;"></div>
<div class="b" style="left:1629.13px;top:824.00px;width:9.00px;height:3.00px;background:#797979;"></div>
<div class="b" style="left:1642.16px;top:824.00px;width:9.00px;height:3.00px;background:#797979;"></div>
<div class="b" style="left:1655.19px;top:809.00px;width:9.00px;height:18.00px;background:#884a6e;"></div>
<div class="b" style="left:1668.22px;top:824.00px;width:9.00px;height:3.00px;background:#797979;"></div>
<div class="b" style="left:1681.25px;top:818.00px;width:9.00px;height:9.00px;background:#884a6e;"></div>
<div class="b" style="left:1694.28px;top:809.00px;width:9.00px;height:18.00px;background:#884a6e;"></div>
<div class="b" style="left:1707.31px;top:818.00px;width:9.00px;height:9.00px;background:#884a6e;"></div>
<div class="b" style="left:1720.34px;top:818.00px;width:9.00px;height:9.00px;background:#884a6e;"></div>
<div class="b" style="left:1733.37px;top:818.00px;width:9.00px;height:9.00px;background:#884a6e;"></div>
<div class="b" style="left:1746.40px;top:824.00px;width:9.00px;height:3.00px;background:#797979;"></div>
<div class="b" style="left:1759.43px;top:824.00px;width:9.00px;height:3.00px;background:#797979;"></div>
<div class="b" style="left:1772.46px;top:818.00px;width:9.00px;height:9.00px;background:#884a6e;"></div>
<div class="b" style="left:1785.49px;top:818.00px;width:9.00px;height:9.00px;background:#884a6e;"></div>
<div class="b" style="left:1798.52px;top:824.00px;width:9.00px;height:3.00px;background:#797979;"></div>
<div class="b" style="left:1811.55px;top:824.00px;width:9.00px;height:3.00px;background:#797979;"></div>
<div class="b" style="left:1824.58px;top:824.00px;width:9.00px;height:3.00px;background:#797979;"></div>
<div class="b" style="left:1837.61px;top:824.00px;width:9.00px;height:3.00px;background:#797979;"></div>
<div class="b" style="left:1850.64px;top:818.00px;width:9.00px;height:9.00px;background:#884a6e;"></div>
<div class="b" style="left:1863.67px;top:809.00px;width:9.00px;height:18.00px;background:#884a6e;"></div>
<div class="b" style="left:1876.70px;top:809.00px;width:9.00px;height:18.00px;background:#884a6e;"></div>
<div class="b" style="left:1889.73px;top:809.00px;width:9.00px;height:18.00px;background:#884a6e;"></div>
<div class="b" style="left:1902.76px;top:824.00px;width:9.00px;height:3.00px;background:#797979;"></div>
<div class="b" style="left:1915.79px;top:824.00px;width:9.00px;height:3.00px;background:#797979;"></div>
<div class="b" style="left:1928.82px;top:824.00px;width:9.00px;height:3.00px;background:#797979;"></div>
<div class="b" style="left:1941.85px;top:824.00px;width:9.00px;height:3.00px;background:#797979;"></div>
<div class="b" style="left:1954.88px;top:824.00px;width:9.00px;height:3.00px;background:#797979;"></div>
<div class="b" style="left:1967.91px;top:818.00px;width:9.00px;height:9.00px;background:#884a6e;"></div>
<div class="b" style="left:1980.94px;top:818.00px;width:9.00px;height:9.00px;background:#884a6e;"></div>
<div class="b" style="left:1993.97px;top:824.00px;width:9.00px;height:3.00px;background:#797979;"></div>
<div class="b" style="left:2007.00px;top:824.00px;width:9.00px;height:3.00px;background:#797979;"></div>
<div class="b" style="left:2020.03px;top:824.00px;width:9.00px;height:3.00px;background:#797979;"></div>
<div class="b" style="left:2033.06px;top:824.00px;width:9.00px;height:3.00px;background:#797979;"></div>
<div class="b" style="left:2046.09px;top:824.00px;width:9.00px;height:3.00px;background:#797979;"></div>
<div class="b" style="left:2059.12px;top:824.00px;width:9.00px;height:3.00px;background:#797979;"></div>
<div class="b" style="left:2072.15px;top:824.00px;width:9.00px;height:3.00px;background:#797979;"></div>
<div class="b" style="left:2085.18px;top:824.00px;width:9.00px;height:3.00px;background:#797979;"></div>
<div class="b" style="left:2098.21px;top:824.00px;width:9.00px;height:3.00px;background:#797979;"></div>
<div class="b" style="left:2111.24px;top:824.00px;width:9.00px;height:3.00px;background:#797979;"></div>
<div class="b" style="left:2124.27px;top:824.00px;width:9.00px;height:3.00px;background:#797979;"></div>
<div class="b" style="left:2137.30px;top:824.00px;width:9.00px;height:3.00px;background:#797979;"></div>
<div class="b" style="left:2150.33px;top:824.00px;width:9.00px;height:3.00px;background:#797979;"></div>
<div class="b" style="left:2163.36px;top:824.00px;width:9.00px;height:3.00px;background:#797979;"></div>
<div class="b" style="left:2176.39px;top:824.00px;width:9.00px;height:3.00px;background:#797979;"></div>
<div class="b" style="left:2189.42px;top:824.00px;width:9.00px;height:3.00px;background:#797979;"></div>
<div class="b" style="left:2202.45px;top:818.00px;width:9.00px;height:9.00px;background:#884a6e;"></div>
<div class="b" style="left:2215.48px;top:824.00px;width:9.00px;height:3.00px;background:#797979;"></div>
<div class="b" style="left:2228.51px;top:824.00px;width:9.00px;height:3.00px;background:#797979;"></div>
<div class="b" style="left:2241.54px;top:824.00px;width:9.00px;height:3.00px;background:#797979;"></div>
<div class="b" style="left:2254.57px;top:824.00px;width:9.00px;height:3.00px;background:#797979;"></div>
<div class="b" style="left:2267.60px;top:824.00px;width:9.00px;height:3.00px;background:#797979;"></div>
<div class="b" style="left:2280.63px;top:824.00px;width:9.00px;height:3.00px;background:#797979;"></div>
<div class="b" style="left:2293.66px;top:824.00px;width:9.00px;height:3.00px;background:#797979;"></div>
<div class="b" style="left:2306.69px;top:824.00px;width:9.00px;height:3.00px;background:#797979;"></div>
<div class="b" style="left:2319.72px;top:824.00px;width:9.00px;height:3.00px;background:#797979;"></div>
<div class="b" style="left:2332.75px;top:824.00px;width:9.00px;height:3.00px;background:#797979;"></div>
<div class="b" style="left:2345.78px;top:824.00px;width:9.00px;height:3.00px;background:#797979;"></div>
<div class="b" style="left:2358.81px;top:800.00px;width:9.00px;height:27.00px;background:#884a6e;"></div>
<div class="b" style="left:2371.84px;top:809.00px;width:9.00px;height:18.00px;background:#884a6e;"></div>
<div class="b" style="left:2384.87px;top:824.00px;width:9.00px;height:3.00px;background:#797979;"></div>
<div class="b" style="left:2397.90px;top:824.00px;width:9.00px;height:3.00px;background:#797979;"></div>
<div class="b" style="left:2410.93px;top:824.00px;width:9.00px;height:3.00px;background:#797979;"></div>
<div class="b" style="left:2423.96px;top:824.00px;width:9.00px;height:3.00px;background:#797979;"></div>
<div class="b" style="left:2436.99px;top:824.00px;width:9.00px;height:3.00px;background:#797979;"></div>
<div class="b" style="left:2450.02px;top:824.00px;width:9.00px;height:3.00px;background:#797979;"></div>
<div class="b" style="left:2463.05px;top:818.00px;width:9.00px;height:9.00px;background:#884a6e;"></div>
<div class="b" style="left:1225.20px;top:875.00px;width:9.00px;height:3.00px;background:#797979;"></div>
<div class="b" style="left:1238.23px;top:875.00px;width:9.00px;height:3.00px;background:#797979;"></div>
<div class="b" style="left:1251.26px;top:875.00px;width:9.00px;height:3.00px;background:#797979;"></div>
<div class="b" style="left:1264.29px;top:875.00px;width:9.00px;height:3.00px;background:#797979;"></div>
<div class="b" style="left:1277.32px;top:875.00px;width:9.00px;height:3.00px;background:#797979;"></div>
<div class="b" style="left:1290.35px;top:875.00px;width:9.00px;height:3.00px;background:#797979;"></div>
<div class="b" style="left:1303.38px;top:875.00px;width:9.00px;height:3.00px;background:#797979;"></div>
<div class="b" style="left:1316.41px;top:875.00px;width:9.00px;height:3.00px;background:#797979;"></div>
<div class="b" style="left:1329.44px;top:875.00px;width:9.00px;height:3.00px;background:#797979;"></div>
<div class="b" style="left:1342.47px;top:875.00px;width:9.00px;height:3.00px;background:#797979;"></div>
<div class="b" style="left:1355.50px;top:875.00px;width:9.00px;height:3.00px;background:#797979;"></div>
<div class="b" style="left:1368.53px;top:875.00px;width:9.00px;height:3.00px;background:#797979;"></div>
<div class="b" style="left:1381.56px;top:875.00px;width:9.00px;height:3.00px;background:#797979;"></div>
<div class="b" style="left:1394.59px;top:875.00px;width:9.00px;height:3.00px;background:#797979;"></div>
<div class="b" style="left:1407.62px;top:875.00px;width:9.00px;height:3.00px;background:#797979;"></div>
<div class="b" style="left:1420.65px;top:875.00px;width:9.00px;height:3.00px;background:#797979;"></div>
<div class="b" style="left:1433.68px;top:875.00px;width:9.00px;height:3.00px;background:#797979;"></div>
<div class="b" style="left:1446.71px;top:875.00px;width:9.00px;height:3.00px;background:#797979;"></div>
<div class="b" style="left:1459.74px;top:875.00px;width:9.00px;height:3.00px;background:#797979;"></div>
<div class="b" style="left:1472.77px;top:875.00px;width:9.00px;height:3.00px;background:#797979;"></div>
<div class="b" style="left:1485.80px;top:875.00px;width:9.00px;height:3.00px;background:#797979;"></div>
<div class="b" style="left:1498.83px;top:875.00px;width:9.00px;height:3.00px;background:#797979;"></div>
<div class="b" style="left:1511.86px;top:875.00px;width:9.00px;height:3.00px;background:#797979;"></div>
<div class="b" style="left:1524.89px;top:875.00px;width:9.00px;height:3.00px;background:#797979;"></div>
<div class="b" style="left:1537.92px;top:875.00px;width:9.00px;height:3.00px;background:#797979;"></div>
<div class="b" style="left:1550.95px;top:875.00px;width:9.00px;height:3.00px;background:#797979;"></div>
<div class="b" style="left:1563.98px;top:875.00px;width:9.00px;height:3.00px;background:#797979;"></div>
<div class="b" style="left:1577.01px;top:875.00px;width:9.00px;height:3.00px;background:#797979;"></div>
<div class="b" style="left:1590.04px;top:875.00px;width:9.00px;height:3.00px;background:#797979;"></div>
<div class="b" style="left:1603.07px;top:875.00px;width:9.00px;height:3.00px;background:#797979;"></div>
<div class="b" style="left:1616.10px;top:875.00px;width:9.00px;height:3.00px;background:#797979;"></div>
<div class="b" style="left:1629.13px;top:875.00px;width:9.00px;height:3.00px;background:#797979;"></div>
<div class="b" style="left:1642.16px;top:875.00px;width:9.00px;height:3.00px;background:#797979;"></div>
<div class="b" style="left:1655.19px;top:875.00px;width:9.00px;height:3.00px;background:#797979;"></div>
<div class="b" style="left:1668.22px;top:875.00px;width:9.00px;height:3.00px;background:#797979;"></div>
<div class="b" style="left:1681.25px;top:875.00px;width:9.00px;height:3.00px;background:#797979;"></div>
<div class="b" style="left:1694.28px;top:875.00px;width:9.00px;height:3.00px;background:#797979;"></div>
<div class="b" style="left:1707.31px;top:875.00px;width:9.00px;height:3.00px;background:#797979;"></div>
<div class="b" style="left:1720.34px;top:875.00px;width:9.00px;height:3.00px;background:#797979;"></div>
<div class="b" style="left:1733.37px;top:875.00px;width:9.00px;height:3.00px;background:#797979;"></div>
<div class="b" style="left:1746.40px;top:875.00px;width:9.00px;height:3.00px;background:#797979;"></div>
<div class="b" style="left:1759.43px;top:875.00px;width:9.00px;height:3.00px;background:#797979;"></div>
<div class="b" style="left:1772.46px;top:875.00px;width:9.00px;height:3.00px;background:#797979;"></div>
<div class="b" style="left:1785.49px;top:875.00px;width:9.00px;height:3.00px;background:#797979;"></div>
<div class="b" style="left:1798.52px;top:875.00px;width:9.00px;height:3.00px;background:#797979;"></div>
<div class="b" style="left:1811.55px;top:875.00px;width:9.00px;height:3.00px;background:#797979;"></div>
<div class="b" style="left:1824.58px;top:875.00px;width:9.00px;height:3.00px;background:#797979;"></div>
<div class="b" style="left:1837.61px;top:875.00px;width:9.00px;height:3.00px;background:#797979;"></div>
<div class="b" style="left:1850.64px;top:875.00px;width:9.00px;height:3.00px;background:#797979;"></div>
<div class="b" style="left:1863.67px;top:875.00px;width:9.00px;height:3.00px;background:#797979;"></div>
<div class="b" style="left:1876.70px;top:875.00px;width:9.00px;height:3.00px;background:#797979;"></div>
<div class="b" style="left:1889.73px;top:875.00px;width:9.00px;height:3.00px;background:#797979;"></div>
<div class="b" style="left:1902.76px;top:875.00px;width:9.00px;height:3.00px;background:#797979;"></div>
<div class="b" style="left:1915.79px;top:875.00px;width:9.00px;height:3.00px;background:#797979;"></div>
<div class="b" style="left:1928.82px;top:875.00px;width:9.00px;height:3.00px;background:#797979;"></div>
<div class="b" style="left:1941.85px;top:875.00px;width:9.00px;height:3.00px;background:#797979;"></div>
<div class="b" style="left:1954.88px;top:875.00px;width:9.00px;height:3.00px;background:#797979;"></div>
<div class="b" style="left:1967.91px;top:875.00px;width:9.00px;height:3.00px;background:#797979;"></div>
<div class="b" style="left:1980.94px;top:875.00px;width:9.00px;height:3.00px;background:#797979;"></div>
<div class="b" style="left:1993.97px;top:875.00px;width:9.00px;height:3.00px;background:#797979;"></div>
<div class="b" style="left:2007.00px;top:875.00px;width:9.00px;height:3.00px;background:#797979;"></div>
<div class="b" style="left:2020.03px;top:875.00px;width:9.00px;height:3.00px;background:#797979;"></div>
<div class="b" style="left:2033.06px;top:875.00px;width:9.00px;height:3.00px;background:#797979;"></div>
<div class="b" style="left:2046.09px;top:875.00px;width:9.00px;height:3.00px;background:#797979;"></div>
<div class="b" style="left:2059.12px;top:875.00px;width:9.00px;height:3.00px;background:#797979;"></div>
<div class="b" style="left:2072.15px;top:875.00px;width:9.00px;height:3.00px;background:#797979;"></div>
<div class="b" style="left:2085.18px;top:875.00px;width:9.00px;height:3.00px;background:#797979;"></div>
<div class="b" style="left:2098.21px;top:875.00px;width:9.00px;height:3.00px;background:#797979;"></div>
<div class="b" style="left:2111.24px;top:875.00px;width:9.00px;height:3.00px;background:#797979;"></div>
<div class="b" style="left:2124.27px;top:875.00px;width:9.00px;height:3.00px;background:#797979;"></div>
<div class="b" style="left:2137.30px;top:875.00px;width:9.00px;height:3.00px;background:#797979;"></div>
<div class="b" style="left:2150.33px;top:875.00px;width:9.00px;height:3.00px;background:#797979;"></div>
<div class="b" style="left:2163.36px;top:875.00px;width:9.00px;height:3.00px;background:#797979;"></div>
<div class="b" style="left:2176.39px;top:875.00px;width:9.00px;height:3.00px;background:#797979;"></div>
<div class="b" style="left:2189.42px;top:875.00px;width:9.00px;height:3.00px;background:#797979;"></div>
<div class="b" style="left:2202.45px;top:875.00px;width:9.00px;height:3.00px;background:#797979;"></div>
<div class="b" style="left:2215.48px;top:875.00px;width:9.00px;height:3.00px;background:#797979;"></div>
<div class="b" style="left:2228.51px;top:875.00px;width:9.00px;height:3.00px;background:#797979;"></div>
<div class="b" style="left:2241.54px;top:875.00px;width:9.00px;height:3.00px;background:#797979;"></div>
<div class="b" style="left:2254.57px;top:875.00px;width:9.00px;height:3.00px;background:#797979;"></div>
<div class="b" style="left:2267.60px;top:875.00px;width:9.00px;height:3.00px;background:#797979;"></div>
<div class="b" style="left:2280.63px;top:875.00px;width:9.00px;height:3.00px;background:#797979;"></div>
<div class="b" style="left:2293.66px;top:875.00px;width:9.00px;height:3.00px;background:#797979;"></div>
<div class="b" style="left:2306.69px;top:875.00px;width:9.00px;height:3.00px;background:#797979;"></div>
<div class="b" style="left:2319.72px;top:875.00px;width:9.00px;height:3.00px;background:#797979;"></div>
<div class="b" style="left:2332.75px;top:875.00px;width:9.00px;height:3.00px;background:#797979;"></div>
<div class="b" style="left:2345.78px;top:875.00px;width:9.00px;height:3.00px;background:#797979;"></div>
<div class="b" style="left:2358.81px;top:875.00px;width:9.00px;height:3.00px;background:#797979;"></div>
<div class="b" style="left:2371.84px;top:875.00px;width:9.00px;height:3.00px;background:#797979;"></div>
<div class="b" style="left:2384.87px;top:875.00px;width:9.00px;height:3.00px;background:#797979;"></div>
<div class="b" style="left:2397.90px;top:875.00px;width:9.00px;height:3.00px;background:#797979;"></div>
<div class="b" style="left:2410.93px;top:875.00px;width:9.00px;height:3.00px;background:#797979;"></div>
<div class="b" style="left:2423.96px;top:875.00px;width:9.00px;height:3.00px;background:#797979;"></div>
<div class="b" style="left:2436.99px;top:875.00px;width:9.00px;height:3.00px;background:#797979;"></div>
<div class="b" style="left:2450.02px;top:875.00px;width:9.00px;height:3.00px;background:#797979;"></div>
<div class="b" style="left:2463.05px;top:875.00px;width:9.00px;height:3.00px;background:#797979;"></div>
<div class="b" style="left:1225.20px;top:926.00px;width:9.00px;height:3.00px;background:#797979;"></div>
<div class="b" style="left:1238.23px;top:926.00px;width:9.00px;height:3.00px;background:#797979;"></div>
<div class="b" style="left:1251.26px;top:926.00px;width:9.00px;height:3.00px;background:#797979;"></div>
<div class="b" style="left:1264.29px;top:926.00px;width:9.00px;height:3.00px;background:#797979;"></div>
<div class="b" style="left:1277.32px;top:926.00px;width:9.00px;height:3.00px;background:#797979;"></div>
<div class="b" style="left:1290.35px;top:926.00px;width:9.00px;height:3.00px;background:#797979;"></div>
<div class="b" style="left:1303.38px;top:926.00px;width:9.00px;height:3.00px;background:#797979;"></div>
<div class="b" style="left:1316.41px;top:926.00px;width:9.00px;height:3.00px;background:#797979;"></div>
<div class="b" style="left:1329.44px;top:926.00px;width:9.00px;height:3.00px;background:#797979;"></div>
<div class="b" style="left:1342.47px;top:926.00px;width:9.00px;height:3.00px;background:#797979;"></div>
<div class="b" style="left:1355.50px;top:926.00px;width:9.00px;height:3.00px;background:#797979;"></div>
<div class="b" style="left:1368.53px;top:926.00px;width:9.00px;height:3.00px;background:#797979;"></div>
<div class="b" style="left:1381.56px;top:926.00px;width:9.00px;height:3.00px;background:#797979;"></div>
<div class="b" style="left:1394.59px;top:926.00px;width:9.00px;height:3.00px;background:#797979;"></div>
<div class="b" style="left:1407.62px;top:926.00px;width:9.00px;height:3.00px;background:#797979;"></div>
<div class="b" style="left:1420.65px;top:926.00px;width:9.00px;height:3.00px;background:#797979;"></div>
<div class="b" style="left:1433.68px;top:926.00px;width:9.00px;height:3.00px;background:#797979;"></div>
<div class="b" style="left:1446.71px;top:926.00px;width:9.00px;height:3.00px;background:#797979;"></div>
<div class="b" style="left:1459.74px;top:926.00px;width:9.00px;height:3.00px;background:#797979;"></div>
<div class="b" style="left:1472.77px;top:926.00px;width:9.00px;height:3.00px;background:#797979;"></div>
<div class="b" style="left:1485.80px;top:926.00px;width:9.00px;height:3.00px;background:#797979;"></div>
<div class="b" style="left:1498.83px;top:926.00px;width:9.00px;height:3.00px;background:#797979;"></div>
<div class="b" style="left:1511.86px;top:926.00px;width:9.00px;height:3.00px;background:#797979;"></div>
<div class="b" style="left:1524.89px;top:926.00px;width:9.00px;height:3.00px;background:#797979;"></div>
<div class="b" style="left:1537.92px;top:926.00px;width:9.00px;height:3.00px;background:#797979;"></div>
<div class="b" style="left:1550.95px;top:926.00px;width:9.00px;height:3.00px;background:#797979;"></div>
<div class="b" style="left:1563.98px;top:926.00px;width:9.00px;height:3.00px;background:#797979;"></div>
<div class="b" style="left:1577.01px;top:926.00px;width:9.00px;height:3.00px;background:#797979;"></div>
<div class="b" style="left:1590.04px;top:926.00px;width:9.00px;height:3.00px;background:#797979;"></div>
<div class="b" style="left:1603.07px;top:926.00px;width:9.00px;height:3.00px;background:#797979;"></div>
<div class="b" style="left:1616.10px;top:926.00px;width:9.00px;height:3.00px;background:#797979;"></div>
<div class="b" style="left:1629.13px;top:926.00px;width:9.00px;height:3.00px;background:#797979;"></div>
<div class="b" style="left:1642.16px;top:926.00px;width:9.00px;height:3.00px;background:#797979;"></div>
<div class="b" style="left:1655.19px;top:926.00px;width:9.00px;height:3.00px;background:#797979;"></div>
<div class="b" style="left:1668.22px;top:926.00px;width:9.00px;height:3.00px;background:#797979;"></div>
<div class="b" style="left:1681.25px;top:926.00px;width:9.00px;height:3.00px;background:#797979;"></div>
<div class="b" style="left:1694.28px;top:926.00px;width:9.00px;height:3.00px;background:#797979;"></div>
<div class="b" style="left:1707.31px;top:926.00px;width:9.00px;height:3.00px;background:#797979;"></div>
<div class="b" style="left:1720.34px;top:926.00px;width:9.00px;height:3.00px;background:#797979;"></div>
<div class="b" style="left:1733.37px;top:926.00px;width:9.00px;height:3.00px;background:#797979;"></div>
<div class="b" style="left:1746.40px;top:926.00px;width:9.00px;height:3.00px;background:#797979;"></div>
<div class="b" style="left:1759.43px;top:926.00px;width:9.00px;height:3.00px;background:#797979;"></div>
<div class="b" style="left:1772.46px;top:926.00px;width:9.00px;height:3.00px;background:#797979;"></div>
<div class="b" style="left:1785.49px;top:926.00px;width:9.00px;height:3.00px;background:#797979;"></div>
<div class="b" style="left:1798.52px;top:926.00px;width:9.00px;height:3.00px;background:#797979;"></div>
<div class="b" style="left:1811.55px;top:926.00px;width:9.00px;height:3.00px;background:#797979;"></div>
<div class="b" style="left:1824.58px;top:926.00px;width:9.00px;height:3.00px;background:#797979;"></div>
<div class="b" style="left:1837.61px;top:926.00px;width:9.00px;height:3.00px;background:#797979;"></div>
<div class="b" style="left:1850.64px;top:926.00px;width:9.00px;height:3.00px;background:#797979;"></div>
<div class="b" style="left:1863.67px;top:926.00px;width:9.00px;height:3.00px;background:#797979;"></div>
<div class="b" style="left:1876.70px;top:926.00px;width:9.00px;height:3.00px;background:#797979;"></div>
<div class="b" style="left:1889.73px;top:926.00px;width:9.00px;height:3.00px;background:#797979;"></div>
<div class="b" style="left:1902.76px;top:926.00px;width:9.00px;height:3.00px;background:#797979;"></div>
<div class="b" style="left:1915.79px;top:926.00px;width:9.00px;height:3.00px;background:#797979;"></div>
<div class="b" style="left:1928.82px;top:926.00px;width:9.00px;height:3.00px;background:#797979;"></div>
<div class="b" style="left:1941.85px;top:926.00px;width:9.00px;height:3.00px;background:#797979;"></div>
<div class="b" style="left:1954.88px;top:926.00px;width:9.00px;height:3.00px;background:#797979;"></div>
<div class="b" style="left:1967.91px;top:926.00px;width:9.00px;height:3.00px;background:#797979;"></div>
<div class="b" style="left:1980.94px;top:926.00px;width:9.00px;height:3.00px;background:#797979;"></div>
<div class="b" style="left:1993.97px;top:926.00px;width:9.00px;height:3.00px;background:#797979;"></div>
<div class="b" style="left:2007.00px;top:926.00px;width:9.00px;height:3.00px;background:#797979;"></div>
<div class="b" style="left:2020.03px;top:926.00px;width:9.00px;height:3.00px;background:#797979;"></div>
<div class="b" style="left:2033.06px;top:926.00px;width:9.00px;height:3.00px;background:#797979;"></div>
<div class="b" style="left:2046.09px;top:926.00px;width:9.00px;height:3.00px;background:#797979;"></div>
<div class="b" style="left:2059.12px;top:926.00px;width:9.00px;height:3.00px;background:#797979;"></div>
<div class="b" style="left:2072.15px;top:926.00px;width:9.00px;height:3.00px;background:#797979;"></div>
<div class="b" style="left:2085.18px;top:926.00px;width:9.00px;height:3.00px;background:#797979;"></div>
<div class="b" style="left:2098.21px;top:926.00px;width:9.00px;height:3.00px;background:#797979;"></div>
<div class="b" style="left:2111.24px;top:926.00px;width:9.00px;height:3.00px;background:#797979;"></div>
<div class="b" style="left:2124.27px;top:926.00px;width:9.00px;height:3.00px;background:#797979;"></div>
<div class="b" style="left:2137.30px;top:926.00px;width:9.00px;height:3.00px;background:#797979;"></div>
<div class="b" style="left:2150.33px;top:926.00px;width:9.00px;height:3.00px;background:#797979;"></div>
<div class="b" style="left:2163.36px;top:926.00px;width:9.00px;height:3.00px;background:#797979;"></div>
<div class="b" style="left:2176.39px;top:926.00px;width:9.00px;height:3.00px;background:#797979;"></div>
<div class="b" style="left:2189.42px;top:926.00px;width:9.00px;height:3.00px;background:#797979;"></div>
<div class="b" style="left:2202.45px;top:926.00px;width:9.00px;height:3.00px;background:#797979;"></div>
<div class="b" style="left:2215.48px;top:926.00px;width:9.00px;height:3.00px;background:#797979;"></div>
<div class="b" style="left:2228.51px;top:926.00px;width:9.00px;height:3.00px;background:#797979;"></div>
<div class="b" style="left:2241.54px;top:926.00px;width:9.00px;height:3.00px;background:#797979;"></div>
<div class="b" style="left:2254.57px;top:926.00px;width:9.00px;height:3.00px;background:#797979;"></div>
<div class="b" style="left:2267.60px;top:926.00px;width:9.00px;height:3.00px;background:#797979;"></div>
<div class="b" style="left:2280.63px;top:926.00px;width:9.00px;height:3.00px;background:#797979;"></div>
<div class="b" style="left:2293.66px;top:926.00px;width:9.00px;height:3.00px;background:#797979;"></div>
<div class="b" style="left:2306.69px;top:926.00px;width:9.00px;height:3.00px;background:#797979;"></div>
<div class="b" style="left:2319.72px;top:926.00px;width:9.00px;height:3.00px;background:#797979;"></div>
<div class="b" style="left:2332.75px;top:926.00px;width:9.00px;height:3.00px;background:#797979;"></div>
<div class="b" style="left:2345.78px;top:926.00px;width:9.00px;height:3.00px;background:#797979;"></div>
<div class="b" style="left:2358.81px;top:926.00px;width:9.00px;height:3.00px;background:#797979;"></div>
<div class="b" style="left:2371.84px;top:926.00px;width:9.00px;height:3.00px;background:#797979;"></div>
<div class="b" style="left:2384.87px;top:926.00px;width:9.00px;height:3.00px;background:#797979;"></div>
<div class="b" style="left:2397.90px;top:926.00px;width:9.00px;height:3.00px;background:#797979;"></div>
<div class="b" style="left:2410.93px;top:926.00px;width:9.00px;height:3.00px;background:#797979;"></div>
<div class="b" style="left:2423.96px;top:926.00px;width:9.00px;height:3.00px;background:#797979;"></div>
<div class="b" style="left:2436.99px;top:926.00px;width:9.00px;height:3.00px;background:#797979;"></div>
<div class="b" style="left:2450.02px;top:926.00px;width:9.00px;height:3.00px;background:#797979;"></div>
<div class="b" style="left:2463.05px;top:926.00px;width:9.00px;height:3.00px;background:#797979;"></div>
<div class="b" style="left:1225.20px;top:977.00px;width:9.00px;height:3.00px;background:#797979;"></div>
<div class="b" style="left:1238.23px;top:977.00px;width:9.00px;height:3.00px;background:#797979;"></div>
<div class="b" style="left:1251.26px;top:977.00px;width:9.00px;height:3.00px;background:#797979;"></div>
<div class="b" style="left:1264.29px;top:977.00px;width:9.00px;height:3.00px;background:#797979;"></div>
<div class="b" style="left:1277.32px;top:977.00px;width:9.00px;height:3.00px;background:#797979;"></div>
<div class="b" style="left:1290.35px;top:977.00px;width:9.00px;height:3.00px;background:#797979;"></div>
<div class="b" style="left:1303.38px;top:977.00px;width:9.00px;height:3.00px;background:#797979;"></div>
<div class="b" style="left:1316.41px;top:977.00px;width:9.00px;height:3.00px;background:#797979;"></div>
<div class="b" style="left:1329.44px;top:977.00px;width:9.00px;height:3.00px;background:#797979;"></div>
<div class="b" style="left:1342.47px;top:977.00px;width:9.00px;height:3.00px;background:#797979;"></div>
<div class="b" style="left:1355.50px;top:977.00px;width:9.00px;height:3.00px;background:#797979;"></div>
<div class="b" style="left:1368.53px;top:977.00px;width:9.00px;height:3.00px;background:#797979;"></div>
<div class="b" style="left:1381.56px;top:977.00px;width:9.00px;height:3.00px;background:#797979;"></div>
<div class="b" style="left:1394.59px;top:977.00px;width:9.00px;height:3.00px;background:#797979;"></div>
<div class="b" style="left:1407.62px;top:977.00px;width:9.00px;height:3.00px;background:#797979;"></div>
<div class="b" style="left:1420.65px;top:977.00px;width:9.00px;height:3.00px;background:#797979;"></div>
<div class="b" style="left:1433.68px;top:977.00px;width:9.00px;height:3.00px;background:#797979;"></div>
<div class="b" style="left:1446.71px;top:977.00px;width:9.00px;height:3.00px;background:#797979;"></div>
<div class="b" style="left:1459.74px;top:977.00px;width:9.00px;height:3.00px;background:#797979;"></div>
<div class="b" style="left:1472.77px;top:977.00px;width:9.00px;height:3.00px;background:#797979;"></div>
<div class="b" style="left:1485.80px;top:977.00px;width:9.00px;height:3.00px;background:#797979;"></div>
<div class="b" style="left:1498.83px;top:977.00px;width:9.00px;height:3.00px;background:#797979;"></div>
<div class="b" style="left:1511.86px;top:977.00px;width:9.00px;height:3.00px;background:#797979;"></div>
<div class="b" style="left:1524.89px;top:977.00px;width:9.00px;height:3.00px;background:#797979;"></div>
<div class="b" style="left:1537.92px;top:977.00px;width:9.00px;height:3.00px;background:#797979;"></div>
<div class="b" style="left:1550.95px;top:977.00px;width:9.00px;height:3.00px;background:#797979;"></div>
<div class="b" style="left:1563.98px;top:977.00px;width:9.00px;height:3.00px;background:#797979;"></div>
<div class="b" style="left:1577.01px;top:977.00px;width:9.00px;height:3.00px;background:#797979;"></div>
<div class="b" style="left:1590.04px;top:977.00px;width:9.00px;height:3.00px;background:#797979;"></div>
<div class="b" style="left:1603.07px;top:977.00px;width:9.00px;height:3.00px;background:#797979;"></div>
<div class="b" style="left:1616.10px;top:977.00px;width:9.00px;height:3.00px;background:#797979;"></div>
<div class="b" style="left:1629.13px;top:977.00px;width:9.00px;height:3.00px;background:#797979;"></div>
<div class="b" style="left:1642.16px;top:977.00px;width:9.00px;height:3.00px;background:#797979;"></div>
<div class="b" style="left:1655.19px;top:977.00px;width:9.00px;height:3.00px;background:#797979;"></div>
<div class="b" style="left:1668.22px;top:977.00px;width:9.00px;height:3.00px;background:#797979;"></div>
<div class="b" style="left:1681.25px;top:977.00px;width:9.00px;height:3.00px;background:#797979;"></div>
<div class="b" style="left:1694.28px;top:977.00px;width:9.00px;height:3.00px;background:#797979;"></div>
<div class="b" style="left:1707.31px;top:977.00px;width:9.00px;height:3.00px;background:#797979;"></div>
<div class="b" style="left:1720.34px;top:977.00px;width:9.00px;height:3.00px;background:#797979;"></div>
<div class="b" style="left:1733.37px;top:977.00px;width:9.00px;height:3.00px;background:#797979;"></div>
<div class="b" style="left:1746.40px;top:977.00px;width:9.00px;height:3.00px;background:#797979;"></div>
<div class="b" style="left:1759.43px;top:977.00px;width:9.00px;height:3.00px;background:#797979;"></div>
<div class="b" style="left:1772.46px;top:977.00px;width:9.00px;height:3.00px;background:#797979;"></div>
<div class="b" style="left:1785.49px;top:977.00px;width:9.00px;height:3.00px;background:#797979;"></div>
<div class="b" style="left:1798.52px;top:977.00px;width:9.00px;height:3.00px;background:#797979;"></div>
<div class="b" style="left:1811.55px;top:977.00px;width:9.00px;height:3.00px;background:#797979;"></div>
<div class="b" style="left:1824.58px;top:977.00px;width:9.00px;height:3.00px;background:#797979;"></div>
<div class="b" style="left:1837.61px;top:977.00px;width:9.00px;height:3.00px;background:#797979;"></div>
<div class="b" style="left:1850.64px;top:977.00px;width:9.00px;height:3.00px;background:#797979;"></div>
<div class="b" style="left:1863.67px;top:977.00px;width:9.00px;height:3.00px;background:#797979;"></div>
<div class="b" style="left:1876.70px;top:977.00px;width:9.00px;height:3.00px;background:#797979;"></div>
<div class="b" style="left:1889.73px;top:977.00px;width:9.00px;height:3.00px;background:#797979;"></div>
<div class="b" style="left:1902.76px;top:977.00px;width:9.00px;height:3.00px;background:#797979;"></div>
<div class="b" style="left:1915.79px;top:977.00px;width:9.00px;height:3.00px;background:#797979;"></div>
<div class="b" style="left:1928.82px;top:977.00px;width:9.00px;height:3.00px;background:#797979;"></div>
<div class="b" style="left:1941.85px;top:977.00px;width:9.00px;height:3.00px;background:#797979;"></div>
<div class="b" style="left:1954.88px;top:977.00px;width:9.00px;height:3.00px;background:#797979;"></div>
<div class="b" style="left:1967.91px;top:977.00px;width:9.00px;height:3.00px;background:#797979;"></div>
<div class="b" style="left:1980.94px;top:977.00px;width:9.00px;height:3.00px;background:#797979;"></div>
<div class="b" style="left:1993.97px;top:977.00px;width:9.00px;height:3.00px;background:#797979;"></div>
<div class="b" style="left:2007.00px;top:977.00px;width:9.00px;height:3.00px;background:#797979;"></div>
<div class="b" style="left:2020.03px;top:977.00px;width:9.00px;height:3.00px;background:#797979;"></div>
<div class="b" style="left:2033.06px;top:977.00px;width:9.00px;height:3.00px;background:#797979;"></div>
<div class="b" style="left:2046.09px;top:977.00px;width:9.00px;height:3.00px;background:#797979;"></div>
<div class="b" style="left:2059.12px;top:977.00px;width:9.00px;height:3.00px;background:#797979;"></div>
<div class="b" style="left:2072.15px;top:977.00px;width:9.00px;height:3.00px;background:#797979;"></div>
<div class="b" style="left:2085.18px;top:977.00px;width:9.00px;height:3.00px;background:#797979;"></div>
<div class="b" style="left:2098.21px;top:977.00px;width:9.00px;height:3.00px;background:#797979;"></div>
<div class="b" style="left:2111.24px;top:977.00px;width:9.00px;height:3.00px;background:#797979;"></div>
<div class="b" style="left:2124.27px;top:977.00px;width:9.00px;height:3.00px;background:#797979;"></div>
<div class="b" style="left:2137.30px;top:977.00px;width:9.00px;height:3.00px;background:#797979;"></div>
<div class="b" style="left:2150.33px;top:977.00px;width:9.00px;height:3.00px;background:#797979;"></div>
<div class="b" style="left:2163.36px;top:977.00px;width:9.00px;height:3.00px;background:#797979;"></div>
<div class="b" style="left:2176.39px;top:977.00px;width:9.00px;height:3.00px;background:#797979;"></div>
<div class="b" style="left:2189.42px;top:977.00px;width:9.00px;height:3.00px;background:#797979;"></div>
<div class="b" style="left:2202.45px;top:977.00px;width:9.00px;height:3.00px;background:#797979;"></div>
<div class="b" style="left:2215.48px;top:977.00px;width:9.00px;height:3.00px;background:#797979;"></div>
<div class="b" style="left:2228.51px;top:977.00px;width:9.00px;height:3.00px;background:#797979;"></div>
<div class="b" style="left:2241.54px;top:977.00px;width:9.00px;height:3.00px;background:#797979;"></div>
<div class="b" style="left:2254.57px;top:977.00px;width:9.00px;height:3.00px;background:#797979;"></div>
<div class="b" style="left:2267.60px;top:977.00px;width:9.00px;height:3.00px;background:#797979;"></div>
<div class="b" style="left:2280.63px;top:977.00px;width:9.00px;height:3.00px;background:#797979;"></div>
<div class="b" style="left:2293.66px;top:977.00px;width:9.00px;height:3.00px;background:#797979;"></div>
<div class="b" style="left:2306.69px;top:977.00px;width:9.00px;height:3.00px;background:#797979;"></div>
<div class="b" style="left:2319.72px;top:977.00px;width:9.00px;height:3.00px;background:#797979;"></div>
<div class="b" style="left:2332.75px;top:977.00px;width:9.00px;height:3.00px;background:#797979;"></div>
<div class="b" style="left:2345.78px;top:977.00px;width:9.00px;height:3.00px;background:#797979;"></div>
<div class="b" style="left:2358.81px;top:977.00px;width:9.00px;height:3.00px;background:#797979;"></div>
<div class="b" style="left:2371.84px;top:977.00px;width:9.00px;height:3.00px;background:#797979;"></div>
<div class="b" style="left:2384.87px;top:977.00px;width:9.00px;height:3.00px;background:#797979;"></div>
<div class="b" style="left:2397.90px;top:977.00px;width:9.00px;height:3.00px;background:#797979;"></div>
<div class="b" style="left:2410.93px;top:977.00px;width:9.00px;height:3.00px;background:#797979;"></div>
<div class="b" style="left:2423.96px;top:977.00px;width:9.00px;height:3.00px;background:#797979;"></div>
<div class="b" style="left:2436.99px;top:977.00px;width:9.00px;height:3.00px;background:#797979;"></div>
<div class="b" style="left:2450.02px;top:977.00px;width:9.00px;height:3.00px;background:#797979;"></div>
<div class="b" style="left:2463.05px;top:977.00px;width:9.00px;height:3.00px;background:#797979;"></div>
<div class="b" style="left:1225.20px;top:1022.00px;width:9.00px;height:9.00px;background:#55585f;"></div>
<div class="b" style="left:1238.23px;top:1028.00px;width:9.00px;height:3.00px;background:#797979;"></div>
<div class="b" style="left:1251.26px;top:1028.00px;width:9.00px;height:3.00px;background:#797979;"></div>
<div class="b" style="left:1264.29px;top:1028.00px;width:9.00px;height:3.00px;background:#797979;"></div>
<div class="b" style="left:1277.32px;top:1028.00px;width:9.00px;height:3.00px;background:#797979;"></div>
<div class="b" style="left:1290.35px;top:1028.00px;width:9.00px;height:3.00px;background:#797979;"></div>
<div class="b" style="left:1303.38px;top:1028.00px;width:9.00px;height:3.00px;background:#797979;"></div>
<div class="b" style="left:1316.41px;top:1028.00px;width:9.00px;height:3.00px;background:#797979;"></div>
<div class="b" style="left:1329.44px;top:1028.00px;width:9.00px;height:3.00px;background:#797979;"></div>
<div class="b" style="left:1342.47px;top:1028.00px;width:9.00px;height:3.00px;background:#797979;"></div>
<div class="b" style="left:1355.50px;top:1022.00px;width:9.00px;height:9.00px;background:#55585f;"></div>
<div class="b" style="left:1368.53px;top:1028.00px;width:9.00px;height:3.00px;background:#797979;"></div>
<div class="b" style="left:1381.56px;top:1022.00px;width:9.00px;height:9.00px;background:#55585f;"></div>
<div class="b" style="left:1394.59px;top:1028.00px;width:9.00px;height:3.00px;background:#797979;"></div>
<div class="b" style="left:1407.62px;top:1028.00px;width:9.00px;height:3.00px;background:#797979;"></div>
<div class="b" style="left:1420.65px;top:1028.00px;width:9.00px;height:3.00px;background:#797979;"></div>
<div class="b" style="left:1433.68px;top:1028.00px;width:9.00px;height:3.00px;background:#797979;"></div>
<div class="b" style="left:1446.71px;top:1028.00px;width:9.00px;height:3.00px;background:#797979;"></div>
<div class="b" style="left:1459.74px;top:1028.00px;width:9.00px;height:3.00px;background:#797979;"></div>
<div class="b" style="left:1472.77px;top:1028.00px;width:9.00px;height:3.00px;background:#797979;"></div>
<div class="b" style="left:1485.80px;top:1028.00px;width:9.00px;height:3.00px;background:#797979;"></div>
<div class="b" style="left:1498.83px;top:1028.00px;width:9.00px;height:3.00px;background:#797979;"></div>
<div class="b" style="left:1511.86px;top:1022.00px;width:9.00px;height:9.00px;background:#55585f;"></div>
<div class="b" style="left:1524.89px;top:1028.00px;width:9.00px;height:3.00px;background:#797979;"></div>
<div class="b" style="left:1537.92px;top:1028.00px;width:9.00px;height:3.00px;background:#797979;"></div>
<div class="b" style="left:1550.95px;top:1022.00px;width:9.00px;height:9.00px;background:#55585f;"></div>
<div class="b" style="left:1563.98px;top:1028.00px;width:9.00px;height:3.00px;background:#797979;"></div>
<div class="b" style="left:1577.01px;top:1028.00px;width:9.00px;height:3.00px;background:#797979;"></div>
<div class="b" style="left:1590.04px;top:1028.00px;width:9.00px;height:3.00px;background:#797979;"></div>
<div class="b" style="left:1603.07px;top:1022.00px;width:9.00px;height:9.00px;background:#55585f;"></div>
<div class="b" style="left:1616.10px;top:1022.00px;width:9.00px;height:9.00px;background:#55585f;"></div>
<div class="b" style="left:1629.13px;top:1028.00px;width:9.00px;height:3.00px;background:#797979;"></div>
<div class="b" style="left:1642.16px;top:1028.00px;width:9.00px;height:3.00px;background:#797979;"></div>
<div class="b" style="left:1655.19px;top:1022.00px;width:9.00px;height:9.00px;background:#55585f;"></div>
<div class="b" style="left:1668.22px;top:1028.00px;width:9.00px;height:3.00px;background:#797979;"></div>
<div class="b" style="left:1681.25px;top:1013.00px;width:9.00px;height:18.00px;background:#55585f;"></div>
<div class="b" style="left:1694.28px;top:1013.00px;width:9.00px;height:18.00px;background:#55585f;"></div>
<div class="b" style="left:1707.31px;top:1022.00px;width:9.00px;height:9.00px;background:#55585f;"></div>
<div class="b" style="left:1720.34px;top:1022.00px;width:9.00px;height:9.00px;background:#55585f;"></div>
<div class="b" style="left:1733.37px;top:1022.00px;width:9.00px;height:9.00px;background:#55585f;"></div>
<div class="b" style="left:1746.40px;top:1028.00px;width:9.00px;height:3.00px;background:#797979;"></div>
<div class="b" style="left:1759.43px;top:1028.00px;width:9.00px;height:3.00px;background:#797979;"></div>
<div class="b" style="left:1772.46px;top:1022.00px;width:9.00px;height:9.00px;background:#55585f;"></div>
<div class="b" style="left:1785.49px;top:1028.00px;width:9.00px;height:3.00px;background:#797979;"></div>
<div class="b" style="left:1798.52px;top:1022.00px;width:9.00px;height:9.00px;background:#55585f;"></div>
<div class="b" style="left:1811.55px;top:1028.00px;width:9.00px;height:3.00px;background:#797979;"></div>
<div class="b" style="left:1824.58px;top:1028.00px;width:9.00px;height:3.00px;background:#797979;"></div>
<div class="b" style="left:1837.61px;top:1028.00px;width:9.00px;height:3.00px;background:#797979;"></div>
<div class="b" style="left:1850.64px;top:1022.00px;width:9.00px;height:9.00px;background:#55585f;"></div>
<div class="b" style="left:1863.67px;top:1013.00px;width:9.00px;height:18.00px;background:#55585f;"></div>
<div class="b" style="left:1876.70px;top:1013.00px;width:9.00px;height:18.00px;background:#55585f;"></div>
<div class="b" style="left:1889.73px;top:1013.00px;width:9.00px;height:18.00px;background:#55585f;"></div>
<div class="b" style="left:1902.76px;top:1028.00px;width:9.00px;height:3.00px;background:#797979;"></div>
<div class="b" style="left:1915.79px;top:1028.00px;width:9.00px;height:3.00px;background:#797979;"></div>
<div class="b" style="left:1928.82px;top:1028.00px;width:9.00px;height:3.00px;background:#797979;"></div>
<div class="b" style="left:1941.85px;top:1028.00px;width:9.00px;height:3.00px;background:#797979;"></div>
<div class="b" style="left:1954.88px;top:1028.00px;width:9.00px;height:3.00px;background:#797979;"></div>
<div class="b" style="left:1967.91px;top:1028.00px;width:9.00px;height:3.00px;background:#797979;"></div>
<div class="b" style="left:1980.94px;top:1013.00px;width:9.00px;height:18.00px;background:#55585f;"></div>
<div class="b" style="left:1993.97px;top:1028.00px;width:9.00px;height:3.00px;background:#797979;"></div>
<div class="b" style="left:2007.00px;top:1028.00px;width:9.00px;height:3.00px;background:#797979;"></div>
<div class="b" style="left:2020.03px;top:1028.00px;width:9.00px;height:3.00px;background:#797979;"></div>
<div class="b" style="left:2033.06px;top:1028.00px;width:9.00px;height:3.00px;background:#797979;"></div>
<div class="b" style="left:2046.09px;top:1028.00px;width:9.00px;height:3.00px;background:#797979;"></div>
<div class="b" style="left:2059.12px;top:1028.00px;width:9.00px;height:3.00px;background:#797979;"></div>
<div class="b" style="left:2072.15px;top:1028.00px;width:9.00px;height:3.00px;background:#797979;"></div>
<div class="b" style="left:2085.18px;top:1028.00px;width:9.00px;height:3.00px;background:#797979;"></div>
<div class="b" style="left:2098.21px;top:1028.00px;width:9.00px;height:3.00px;background:#797979;"></div>
<div class="b" style="left:2111.24px;top:1028.00px;width:9.00px;height:3.00px;background:#797979;"></div>
<div class="b" style="left:2124.27px;top:1028.00px;width:9.00px;height:3.00px;background:#797979;"></div>
<div class="b" style="left:2137.30px;top:1028.00px;width:9.00px;height:3.00px;background:#797979;"></div>
<div class="b" style="left:2150.33px;top:1028.00px;width:9.00px;height:3.00px;background:#797979;"></div>
<div class="b" style="left:2163.36px;top:1028.00px;width:9.00px;height:3.00px;background:#797979;"></div>
<div class="b" style="left:2176.39px;top:1028.00px;width:9.00px;height:3.00px;background:#797979;"></div>
<div class="b" style="left:2189.42px;top:1028.00px;width:9.00px;height:3.00px;background:#797979;"></div>
<div class="b" style="left:2202.45px;top:1028.00px;width:9.00px;height:3.00px;background:#797979;"></div>
<div class="b" style="left:2215.48px;top:1022.00px;width:9.00px;height:9.00px;background:#55585f;"></div>
<div class="b" style="left:2228.51px;top:1028.00px;width:9.00px;height:3.00px;background:#797979;"></div>
<div class="b" style="left:2241.54px;top:1028.00px;width:9.00px;height:3.00px;background:#797979;"></div>
<div class="b" style="left:2254.57px;top:1028.00px;width:9.00px;height:3.00px;background:#797979;"></div>
<div class="b" style="left:2267.60px;top:1028.00px;width:9.00px;height:3.00px;background:#797979;"></div>
<div class="b" style="left:2280.63px;top:1028.00px;width:9.00px;height:3.00px;background:#797979;"></div>
<div class="b" style="left:2293.66px;top:1028.00px;width:9.00px;height:3.00px;background:#797979;"></div>
<div class="b" style="left:2306.69px;top:1028.00px;width:9.00px;height:3.00px;background:#797979;"></div>
<div class="b" style="left:2319.72px;top:1028.00px;width:9.00px;height:3.00px;background:#797979;"></div>
<div class="b" style="left:2332.75px;top:1028.00px;width:9.00px;height:3.00px;background:#797979;"></div>
<div class="b" style="left:2345.78px;top:1028.00px;width:9.00px;height:3.00px;background:#797979;"></div>
<div class="b" style="left:2358.81px;top:1004.00px;width:9.00px;height:27.00px;background:#55585f;"></div>
<div class="b" style="left:2371.84px;top:1022.00px;width:9.00px;height:9.00px;background:#55585f;"></div>
<div class="b" style="left:2384.87px;top:1022.00px;width:9.00px;height:9.00px;background:#55585f;"></div>
<div class="b" style="left:2397.90px;top:1028.00px;width:9.00px;height:3.00px;background:#797979;"></div>
<div class="b" style="left:2410.93px;top:1028.00px;width:9.00px;height:3.00px;background:#797979;"></div>
<div class="b" style="left:2423.96px;top:1028.00px;width:9.00px;height:3.00px;background:#797979;"></div>
<div class="b" style="left:2436.99px;top:1028.00px;width:9.00px;height:3.00px;background:#797979;"></div>
<div class="b" style="left:2450.02px;top:1028.00px;width:9.00px;height:3.00px;background:#797979;"></div>
<div class="b" style="left:2463.05px;top:1028.00px;width:9.00px;height:3.00px;background:#797979;"></div>
<svg class="b" style="left:674.00px;top:1128.30px;" width="16" height="11" viewBox="0 0 16 11"><path d="M1 1l6.7 7.6l6.7-7.6" fill="none" stroke="#1c1c1c" stroke-width="1.7"/></svg>
<span class="t" style="top:1121.24px;font-size:22.4px;color:#121212;font-weight:700;letter-spacing:-0.620px;left:709.80px;">HTTP response metrics</span>
<svg class="b" style="left:959.50px;top:1119.80px;" width="22" height="22" viewBox="0 0 22 22"><circle cx="11" cy="11" r="9.8" fill="none" stroke="#4c4c4c" stroke-width="1.5"/><path d="M8.1 8.9a2.9 2.9 0 1 1 4.3 2.5c-1 .6-1.4 1.1-1.4 2.1" fill="none" stroke="#4c4c4c" stroke-width="1.5"/><circle cx="11" cy="15.9" r="1" fill="#4c4c4c"/></svg>
<span class="t" style="top:1120.09px;font-size:20.8px;color:#222222;left:1005.00px;transform:scaleX(0.9201);transform-origin:0 0;">View all</span>
<svg class="b" style="left:300.00px;top:1100.00px;" width="2247" height="194" viewBox="0 0 2247 194"><rect x="0" y="27" width="2246" height="3.600" fill="#888888"/><path d="M0 30.3H935.3a21 21 0 0 0 0.2 0c0-12 9.5-21.7 21.5-21.7h48c12 0 21.5 9.7 21.5 21.7H2246V200H0z" fill="#8c8c8c" stroke="#767676" stroke-width="1.3"/></svg>
<svg class="b" style="left:1272.00px;top:1112.00px;" width="18" height="12" viewBox="0 0 18 12"><path d="M2 2.3l7 6.4l7-6.4" fill="none" stroke="#1c1c1c" stroke-width="2.6"/></svg>
<div class="b" style="left:470.00px;top:1149.30px;width:37.50px;height:33.50px;border:1.2px solid #767676;border-radius:3px;box-sizing:border-box;"></div>
<svg class="b" style="left:486.00px;top:1157.00px;" width="14" height="18" viewBox="0 0 14 18"><path d="M8 1.900l-6.100 5.800l6.100 5.800" fill="none" stroke="#1c1c1c" stroke-width="2.600"/></svg>
<div class="b" style="left:514.20px;top:1149.30px;width:196.40px;height:33.50px;border:1.2px solid #767676;border-radius:3px;box-sizing:border-box;"></div>
<span class="t" style="top:1154.19px;font-size:20.8px;color:#1c1c1c;left:533.20px;transform:scaleX(0.9190);transform-origin:0 0;">Today, 16:29:12</span>
<svg class="b" style="left:678.00px;top:1160.00px;" width="16" height="12" viewBox="0 0 16 12"><path d="M2 2.3l6 5.8l6-5.8" fill="none" stroke="#1c1c1c" stroke-width="2.2"/></svg>
<div class="b" style="left:717.20px;top:1149.30px;width:33.70px;height:33.50px;background:#878787;border:1.2px solid #767676;border-radius:3px;box-sizing:border-box;"></div>
<svg class="b" style="left:727.00px;top:1157.50px;" width="14" height="16" viewBox="0 0 14 16"><path d="M4 2.200l5.500 5.600l-5.500 5.600" fill="none" stroke="#676767" stroke-width="1.900"/></svg>
<div class="b" style="left:787.30px;top:1149.30px;width:116.70px;height:33.50px;border:1.4px solid #004f93;border-radius:3px;box-sizing:border-box;"></div>
<div class="b" style="left:807.10px;top:1158.20px;width:4.30px;height:12.70px;background:#004f93;"></div>
<div class="b" style="left:813.70px;top:1158.20px;width:4.30px;height:12.70px;background:#004f93;"></div>
<span class="t" style="top:1154.19px;font-size:20.8px;color:#004f93;left:831.80px;transform:scaleX(0.9123);transform-origin:0 0;">Pause</span>
<span class="t" style="top:1199.46px;font-size:16px;color:#727272;letter-spacing:-0.104px;left:695.40px;">Feb 18, 22:14</span>
<div class="b" style="left:743.00px;top:1219.00px;width:2.00px;height:9.00px;background:#767676;"></div>
<span class="t" style="top:1199.46px;font-size:16px;color:#727272;letter-spacing:-0.104px;left:1070.30px;">Feb 19, 02:12</span>
<div class="b" style="left:1118.00px;top:1219.00px;width:2.00px;height:9.00px;background:#767676;"></div>
<span class="t" style="top:1199.46px;font-size:16px;color:#727272;letter-spacing:-0.012px;left:1445.20px;">Feb 19, 06:11</span>
<div class="b" style="left:1493.00px;top:1219.00px;width:2.00px;height:9.00px;background:#767676;"></div>
<span class="t" style="top:1199.46px;font-size:16px;color:#727272;letter-spacing:-0.104px;left:1820.10px;">Feb 19, 10:09</span>
<div class="b" style="left:1868.00px;top:1219.00px;width:2.00px;height:9.00px;background:#767676;"></div>
<span class="t" style="top:1199.46px;font-size:16px;color:#727272;letter-spacing:-0.104px;left:2195.00px;">Feb 19, 14:08</span>
<div class="b" style="left:2243.00px;top:1219.00px;width:2.00px;height:9.00px;background:#767676;"></div>
<div class="b" style="left:469.77px;top:1275.00px;width:11.40px;height:3.00px;background:#797979;"></div>
<div class="b" style="left:485.50px;top:1264.00px;width:11.40px;height:14.00px;background:#465f91;"></div>
<div class="b" style="left:501.23px;top:1275.00px;width:11.40px;height:3.00px;background:#797979;"></div>
<div class="b" style="left:516.96px;top:1275.00px;width:11.40px;height:3.00px;background:#797979;"></div>
<div class="b" style="left:532.69px;top:1275.00px;width:11.40px;height:3.00px;background:#797979;"></div>
<div class="b" style="left:548.42px;top:1275.00px;width:11.40px;height:3.00px;background:#797979;"></div>
<div class="b" style="left:564.15px;top:1275.00px;width:11.40px;height:3.00px;background:#797979;"></div>
<div class="b" style="left:579.88px;top:1275.00px;width:11.40px;height:3.00px;background:#797979;"></div>
<div class="b" style="left:595.61px;top:1275.00px;width:11.40px;height:3.00px;background:#797979;"></div>
<div class="b" style="left:611.34px;top:1275.00px;width:11.40px;height:3.00px;background:#797979;"></div>
<div class="b" style="left:627.07px;top:1275.00px;width:11.40px;height:3.00px;background:#797979;"></div>
<div class="b" style="left:642.80px;top:1275.00px;width:11.40px;height:3.00px;background:#797979;"></div>
<div class="b" style="left:658.53px;top:1275.00px;width:11.40px;height:3.00px;background:#797979;"></div>
<div class="b" style="left:674.26px;top:1275.00px;width:11.40px;height:3.00px;background:#797979;"></div>
<div class="b" style="left:689.99px;top:1275.00px;width:11.40px;height:3.00px;background:#797979;"></div>
<div class="b" style="left:705.72px;top:1271.00px;width:11.40px;height:7.00px;background:#465f91;"></div>
<div class="b" style="left:721.45px;top:1271.00px;width:11.40px;height:7.00px;background:#465f91;"></div>
<div class="b" style="left:737.18px;top:1275.00px;width:11.40px;height:3.00px;background:#797979;"></div>
<div class="b" style="left:752.91px;top:1275.00px;width:11.40px;height:3.00px;background:#797979;"></div>
<div class="b" style="left:768.64px;top:1275.00px;width:11.40px;height:3.00px;background:#797979;"></div>
<div class="b" style="left:784.37px;top:1271.00px;width:11.40px;height:7.00px;background:#465f91;"></div>
<div class="b" style="left:800.10px;top:1271.00px;width:11.40px;height:7.00px;background:#465f91;"></div>
<div class="b" style="left:815.83px;top:1275.00px;width:11.40px;height:3.00px;background:#797979;"></div>
<div class="b" style="left:831.56px;top:1275.00px;width:11.40px;height:3.00px;background:#797979;"></div>
<div class="b" style="left:847.29px;top:1275.00px;width:11.40px;height:3.00px;background:#797979;"></div>
<div class="b" style="left:863.02px;top:1275.00px;width:11.40px;height:3.00px;background:#797979;"></div>
<div class="b" style="left:878.75px;top:1264.00px;width:11.40px;height:14.00px;background:#465f91;"></div>
<div class="b" style="left:894.48px;top:1275.00px;width:11.40px;height:3.00px;background:#797979;"></div>
<div class="b" style="left:910.21px;top:1264.00px;width:11.40px;height:14.00px;background:#465f91;"></div>
<div class="b" style="left:925.94px;top:1275.00px;width:11.40px;height:3.00px;background:#797979;"></div>
<div class="b" style="left:941.67px;top:1275.00px;width:11.40px;height:3.00px;background:#797979;"></div>
<div class="b" style="left:957.40px;top:1275.00px;width:11.40px;height:3.00px;background:#797979;"></div>
<div class="b" style="left:973.13px;top:1264.00px;width:11.40px;height:14.00px;background:#465f91;"></div>
<div class="b" style="left:988.86px;top:1271.00px;width:11.40px;height:7.00px;background:#465f91;"></div>
<div class="b" style="left:1004.59px;top:1275.00px;width:11.40px;height:3.00px;background:#797979;"></div>
<div class="b" style="left:1020.32px;top:1275.00px;width:11.40px;height:3.00px;background:#797979;"></div>
<div class="b" style="left:1036.05px;top:1257.00px;width:11.40px;height:21.00px;background:#465f91;"></div>
<div class="b" style="left:1051.78px;top:1251.00px;width:11.40px;height:27.00px;background:#465f91;"></div>
<div class="b" style="left:1067.51px;top:1275.00px;width:11.40px;height:3.00px;background:#797979;"></div>
<div class="b" style="left:1083.24px;top:1264.00px;width:11.40px;height:14.00px;background:#465f91;"></div>
<div class="b" style="left:1098.97px;top:1271.00px;width:11.40px;height:7.00px;background:#465f91;"></div>
<div class="b" style="left:1114.70px;top:1271.00px;width:11.40px;height:7.00px;background:#465f91;"></div>
<div class="b" style="left:1130.43px;top:1264.00px;width:11.40px;height:14.00px;background:#465f91;"></div>
<div class="b" style="left:1146.16px;top:1275.00px;width:11.40px;height:3.00px;background:#797979;"></div>
<div class="b" style="left:1161.89px;top:1275.00px;width:11.40px;height:3.00px;background:#797979;"></div>
<div class="b" style="left:1177.62px;top:1275.00px;width:11.40px;height:3.00px;background:#797979;"></div>
<div class="b" style="left:1193.35px;top:1275.00px;width:11.40px;height:3.00px;background:#797979;"></div>
<div class="b" style="left:1209.08px;top:1257.00px;width:11.40px;height:21.00px;background:#465f91;"></div>
<div class="b" style="left:1224.81px;top:1275.00px;width:11.40px;height:3.00px;background:#797979;"></div>
<div class="b" style="left:1240.54px;top:1271.00px;width:11.40px;height:7.00px;background:#465f91;"></div>
<div class="b" style="left:1256.27px;top:1275.00px;width:11.40px;height:3.00px;background:#797979;"></div>
<div class="b" style="left:1272.00px;top:1275.00px;width:11.40px;height:3.00px;background:#797979;"></div>
<div class="b" style="left:1287.73px;top:1275.00px;width:11.40px;height:3.00px;background:#797979;"></div>
<div class="b" style="left:1303.46px;top:1275.00px;width:11.40px;height:3.00px;background:#797979;"></div>
<div class="b" style="left:1319.19px;top:1275.00px;width:11.40px;height:3.00px;background:#797979;"></div>
<div class="b" style="left:1334.92px;top:1264.00px;width:11.40px;height:14.00px;background:#465f91;"></div>
<div class="b" style="left:1350.65px;top:1264.00px;width:11.40px;height:14.00px;background:#465f91;"></div>
<div class="b" style="left:1366.38px;top:1264.00px;width:11.40px;height:14.00px;background:#465f91;"></div>
<div class="b" style="left:1382.11px;top:1257.00px;width:11.40px;height:21.00px;background:#465f91;"></div>
<div class="b" style="left:1397.84px;top:1264.00px;width:11.40px;height:14.00px;background:#465f91;"></div>
<div class="b" style="left:1413.57px;top:1257.00px;width:11.40px;height:21.00px;background:#465f91;"></div>
<div class="b" style="left:1429.30px;top:1275.00px;width:11.40px;height:3.00px;background:#797979;"></div>
<div class="b" style="left:1445.03px;top:1275.00px;width:11.40px;height:3.00px;background:#797979;"></div>
<div class="b" style="left:1460.76px;top:1275.00px;width:11.40px;height:3.00px;background:#797979;"></div>
<div class="b" style="left:1476.49px;top:1275.00px;width:11.40px;height:3.00px;background:#797979;"></div>
<div class="b" style="left:1492.22px;top:1275.00px;width:11.40px;height:3.00px;background:#797979;"></div>
<div class="b" style="left:1507.95px;top:1275.00px;width:11.40px;height:3.00px;background:#797979;"></div>
<div class="b" style="left:1523.68px;top:1275.00px;width:11.40px;height:3.00px;background:#797979;"></div>
<div class="b" style="left:1539.41px;top:1275.00px;width:11.40px;height:3.00px;background:#797979;"></div>
<div class="b" style="left:1555.14px;top:1271.00px;width:11.40px;height:7.00px;background:#465f91;"></div>
<div class="b" style="left:1570.87px;top:1264.00px;width:11.40px;height:14.00px;background:#465f91;"></div>
<div class="b" style="left:1586.60px;top:1271.00px;width:11.40px;height:7.00px;background:#465f91;"></div>
<div class="b" style="left:1602.33px;top:1275.00px;width:11.40px;height:3.00px;background:#797979;"></div>
<div class="b" style="left:1618.06px;top:1275.00px;width:11.40px;height:3.00px;background:#797979;"></div>
<div class="b" style="left:1633.79px;top:1275.00px;width:11.40px;height:3.00px;background:#797979;"></div>
<div class="b" style="left:1649.52px;top:1275.00px;width:11.40px;height:3.00px;background:#797979;"></div>
<div class="b" style="left:1665.25px;top:1275.00px;width:11.40px;height:3.00px;background:#797979;"></div>
<div class="b" style="left:1680.98px;top:1275.00px;width:11.40px;height:3.00px;background:#797979;"></div>
<div class="b" style="left:1696.71px;top:1275.00px;width:11.40px;height:3.00px;background:#797979;"></div>
<div class="b" style="left:1712.44px;top:1275.00px;width:11.40px;height:3.00px;background:#797979;"></div>
<div class="b" style="left:1728.17px;top:1275.00px;width:11.40px;height:3.00px;background:#797979;"></div>
<div class="b" style="left:1743.90px;top:1275.00px;width:11.40px;height:3.00px;background:#797979;"></div>
<div class="b" style="left:1759.63px;top:1275.00px;width:11.40px;height:3.00px;background:#797979;"></div>
<div class="b" style="left:1775.36px;top:1275.00px;width:11.40px;height:3.00px;background:#797979;"></div>
<div class="b" style="left:1791.09px;top:1275.00px;width:11.40px;height:3.00px;background:#797979;"></div>
<div class="b" style="left:1806.82px;top:1275.00px;width:11.40px;height:3.00px;background:#797979;"></div>
<div class="b" style="left:1822.55px;top:1275.00px;width:11.40px;height:3.00px;background:#797979;"></div>
<div class="b" style="left:1838.28px;top:1275.00px;width:11.40px;height:3.00px;background:#797979;"></div>
<div class="b" style="left:1854.01px;top:1275.00px;width:11.40px;height:3.00px;background:#797979;"></div>
<div class="b" style="left:1869.74px;top:1275.00px;width:11.40px;height:3.00px;background:#797979;"></div>
<div class="b" style="left:1885.47px;top:1275.00px;width:11.40px;height:3.00px;background:#797979;"></div>
<div class="b" style="left:1901.20px;top:1275.00px;width:11.40px;height:3.00px;background:#797979;"></div>
<div class="b" style="left:1916.93px;top:1275.00px;width:11.40px;height:3.00px;background:#797979;"></div>
<div class="b" style="left:1932.66px;top:1275.00px;width:11.40px;height:3.00px;background:#797979;"></div>
<div class="b" style="left:1948.39px;top:1275.00px;width:11.40px;height:3.00px;background:#797979;"></div>
<div class="b" style="left:1964.12px;top:1275.00px;width:11.40px;height:3.00px;background:#797979;"></div>
<div class="b" style="left:1979.85px;top:1271.00px;width:11.40px;height:7.00px;background:#465f91;"></div>
<div class="b" style="left:1995.58px;top:1271.00px;width:11.40px;height:7.00px;background:#465f91;"></div>
<div class="b" style="left:2011.31px;top:1275.00px;width:11.40px;height:3.00px;background:#797979;"></div>
<div class="b" style="left:2027.04px;top:1275.00px;width:11.40px;height:3.00px;background:#797979;"></div>
<div class="b" style="left:2042.77px;top:1275.00px;width:11.40px;height:3.00px;background:#797979;"></div>
<div class="b" style="left:2058.50px;top:1275.00px;width:11.40px;height:3.00px;background:#797979;"></div>
<div class="b" style="left:2074.23px;top:1275.00px;width:11.40px;height:3.00px;background:#797979;"></div>
<div class="b" style="left:2089.96px;top:1275.00px;width:11.40px;height:3.00px;background:#797979;"></div>
<div class="b" style="left:2105.69px;top:1275.00px;width:11.40px;height:3.00px;background:#797979;"></div>
<div class="b" style="left:2121.42px;top:1275.00px;width:11.40px;height:3.00px;background:#797979;"></div>
<div class="b" style="left:2137.15px;top:1275.00px;width:11.40px;height:3.00px;background:#797979;"></div>
<div class="b" style="left:2152.88px;top:1275.00px;width:11.40px;height:3.00px;background:#797979;"></div>
<div class="b" style="left:2168.61px;top:1275.00px;width:11.40px;height:3.00px;background:#797979;"></div>
<div class="b" style="left:2184.34px;top:1275.00px;width:11.40px;height:3.00px;background:#797979;"></div>
<div class="b" style="left:2200.07px;top:1275.00px;width:11.40px;height:3.00px;background:#797979;"></div>
<div class="b" style="left:2215.80px;top:1275.00px;width:11.40px;height:3.00px;background:#797979;"></div>
<div class="b" style="left:2231.53px;top:1275.00px;width:11.40px;height:3.00px;background:#797979;"></div>
<div class="b" style="left:2247.26px;top:1271.00px;width:11.40px;height:7.00px;background:#465f91;"></div>
<div class="b" style="left:2262.99px;top:1244.00px;width:11.40px;height:34.00px;background:#465f91;"></div>
<div class="b" style="left:2278.72px;top:1264.00px;width:11.40px;height:14.00px;background:#465f91;"></div>
<div class="b" style="left:2294.45px;top:1271.00px;width:11.40px;height:7.00px;background:#465f91;"></div>
<div class="b" style="left:2310.18px;top:1271.00px;width:11.40px;height:7.00px;background:#465f91;"></div>
<div class="b" style="left:2325.91px;top:1275.00px;width:11.40px;height:3.00px;background:#797979;"></div>
<div class="b" style="left:2341.64px;top:1275.00px;width:11.40px;height:3.00px;background:#797979;"></div>
<div class="b" style="left:2357.37px;top:1275.00px;width:11.40px;height:3.00px;background:#797979;"></div>
<div class="b" style="left:2373.10px;top:1275.00px;width:11.40px;height:3.00px;background:#797979;"></div>
<div class="b" style="left:2388.83px;top:1275.00px;width:11.40px;height:3.00px;background:#797979;"></div>
<div class="b" style="left:2404.56px;top:1275.00px;width:11.40px;height:3.00px;background:#797979;"></div>
<div class="b" style="left:2420.29px;top:1275.00px;width:11.40px;height:3.00px;background:#797979;"></div>
<div class="b" style="left:2436.02px;top:1275.00px;width:11.40px;height:3.00px;background:#797979;"></div>
<div class="b" style="left:2451.75px;top:1275.00px;width:11.40px;height:3.00px;background:#797979;"></div>
<div class="b" style="left:470.00px;top:1228.00px;width:15.90px;height:3.00px;background:#3a7841;"></div>
<div class="b" style="left:489.20px;top:1228.00px;width:3.30px;height:3.00px;background:#8e5d29;"></div>
<div class="b" style="left:495.30px;top:1228.00px;width:220.00px;height:3.00px;background:#3a7841;"></div>
<div class="b" style="left:718.70px;top:1228.00px;width:3.30px;height:3.00px;background:#8e5d29;"></div>
<div class="b" style="left:724.90px;top:1228.00px;width:61.20px;height:3.00px;background:#3a7841;"></div>
<div class="b" style="left:789.50px;top:1228.00px;width:22.10px;height:3.00px;background:#8e5d29;"></div>
<div class="b" style="left:814.70px;top:1228.00px;width:68.90px;height:3.00px;background:#3a7841;"></div>
<div class="b" style="left:886.70px;top:1228.00px;width:1.80px;height:3.00px;background:#8e5d29;"></div>
<div class="b" style="left:891.80px;top:1228.00px;width:23.50px;height:3.00px;background:#3a7841;"></div>
<div class="b" style="left:920.10px;top:1228.00px;width:61.50px;height:3.00px;background:#3a7841;"></div>
<div class="b" style="left:985.90px;top:1228.00px;width:11.70px;height:3.00px;background:#3a7841;"></div>
<div class="b" style="left:1000.50px;top:1228.00px;width:37.60px;height:3.00px;background:#8e5d29;"></div>
<div class="b" style="left:1041.20px;top:1228.00px;width:3.00px;height:3.00px;background:#3a7841;"></div>
<div class="b" style="left:1048.90px;top:1228.00px;width:3.50px;height:3.00px;background:#3a7841;"></div>
<div class="b" style="left:1055.30px;top:1228.00px;width:3.30px;height:3.00px;background:#8e5d29;"></div>
<div class="b" style="left:1066.70px;top:1228.00px;width:24.80px;height:3.00px;background:#3a7841;"></div>
<div class="b" style="left:1098.00px;top:1228.00px;width:4.70px;height:3.00px;background:#3a7841;"></div>
<div class="b" style="left:1105.80px;top:1228.00px;width:12.10px;height:3.00px;background:#8e5d29;"></div>
<div class="b" style="left:1121.20px;top:1228.00px;width:9.80px;height:3.00px;background:#3a7841;"></div>
<div class="b" style="left:1135.90px;top:1228.00px;width:71.60px;height:3.00px;background:#3a7841;"></div>
<div class="b" style="left:1210.80px;top:1228.00px;width:1.60px;height:3.00px;background:#8e5d29;"></div>
<div class="b" style="left:1215.70px;top:1228.00px;width:6.30px;height:3.00px;background:#3a7841;"></div>
<div class="b" style="left:1225.50px;top:1228.00px;width:18.20px;height:3.00px;background:#8e5d29;"></div>
<div class="b" style="left:1247.20px;top:1228.00px;width:87.90px;height:3.00px;background:#3a7841;"></div>
<div class="b" style="left:1338.40px;top:1228.00px;width:4.70px;height:3.00px;background:#8e5d29;"></div>
<div class="b" style="left:1346.20px;top:1228.00px;width:12.70px;height:3.00px;background:#3a7841;"></div>
<div class="b" style="left:1363.80px;top:1228.00px;width:1.20px;height:3.00px;background:#3a7841;"></div>
<div class="b" style="left:1368.30px;top:1228.00px;width:6.50px;height:3.00px;background:#8e5d29;"></div>
<div class="b" style="left:1377.50px;top:1228.00px;width:6.50px;height:3.00px;background:#3a7841;"></div>
<div class="b" style="left:1388.80px;top:1228.00px;width:3.00px;height:3.00px;background:#3a7841;"></div>
<div class="b" style="left:1394.90px;top:1228.00px;width:4.90px;height:3.00px;background:#8e5d29;"></div>
<div class="b" style="left:1402.60px;top:1228.00px;width:3.10px;height:3.00px;background:#3a7841;"></div>
<div class="b" style="left:1409.00px;top:1228.00px;width:7.80px;height:3.00px;background:#8e5d29;"></div>
<div class="b" style="left:1425.00px;top:1228.00px;width:138.10px;height:3.00px;background:#3a7841;"></div>
<div class="b" style="left:1566.50px;top:1228.00px;width:8.40px;height:3.00px;background:#8e5d29;"></div>
<div class="b" style="left:1580.70px;top:1228.00px;width:6.50px;height:3.00px;background:#8e5d29;"></div>
<div class="b" style="left:1590.30px;top:1228.00px;width:390.70px;height:3.00px;background:#3a7841;"></div>
<div class="b" style="left:1983.50px;top:1228.00px;width:23.50px;height:3.00px;background:#8e5d29;"></div>
<div class="b" style="left:2010.30px;top:1228.00px;width:244.20px;height:3.00px;background:#3a7841;"></div>
<div class="b" style="left:2257.80px;top:1228.00px;width:7.80px;height:3.00px;background:#8e5d29;"></div>
<div class="b" style="left:2276.40px;top:1228.00px;width:3.30px;height:3.00px;background:#3a7841;"></div>
<div class="b" style="left:2282.20px;top:1228.00px;width:2.40px;height:3.00px;background:#8e5d29;"></div>
<div class="b" style="left:2287.50px;top:1228.00px;width:6.50px;height:3.00px;background:#3a7841;"></div>
<div class="b" style="left:2296.90px;top:1228.00px;width:23.70px;height:3.00px;background:#8e5d29;"></div>
<div class="b" style="left:2323.90px;top:1228.00px;width:129.50px;height:3.00px;background:#3a7841;"></div>
<div class="b" style="left:2456.70px;top:1228.00px;width:8.40px;height:3.00px;background:#8e5d29;"></div>
<div class="b" style="left:2464.90px;top:1214.00px;width:1.20px;height:70.00px;background:#2a2a2a;"></div>
<div class="b" style="left:2461.80px;top:1280.80px;width:7.20px;height:7.20px;background:#1a1a1a;border-radius:50%;"></div>
<div class="b" style="left:2396.40px;top:1186.00px;width:137.20px;height:28.70px;background:#212121;border-radius:3px;"></div>
<span class="t" style="top:1192.65px;font-size:16.6px;color:#a4a4a4;letter-spacing:-0.362px;left:2405.10px;">Feb 19, 16:29:12</span>
<svg class="b" style="left:2518.00px;top:600.00px;" width="30" height="100" viewBox="0 0 30 100"><path d="M28.6 4.800c-12.5 0-23.2 9.500-23.200 22v46c0 12.500 10.700 22 23.200 22" fill="#888888" stroke="#767676" stroke-width="1.2"/></svg>
<div class="b" style="left:2546.00px;top:606.00px;width:2.00px;height:88.00px;background:#888888;"></div>
<svg class="b" style="left:2529.00px;top:641.00px;" width="14" height="18" viewBox="0 0 14 18"><path d="M10.3 2.6l-6.6 6.5l6.6 6.5" fill="none" stroke="#1c1c1c" stroke-width="2.5"/></svg>
<div class="b" style="left:0.00px;top:0.00px;width:481.00px;height:1294.00px;background:#ffffff;box-shadow:0 13px 16px -8px rgba(0,0,0,.14),0 26px 38px 3px rgba(0,0,0,.09),0 10px 60px 10px rgba(0,0,0,.10);"></div>
<div class="b" style="left:0.00px;top:0.00px;width:481.00px;height:1.00px;background:#0a1726;"></div>
<div class="b" style="left:0.00px;top:1.00px;width:481.00px;height:1.00px;background:#241d1b;"></div>
<div class="b" style="left:1.00px;top:2.00px;width:480.00px;height:59.50px;background:#008aff;"></div>
<div class="b" style="left:0.00px;top:0.00px;width:1.00px;height:1067.00px;background:#26282d;"></div>
<svg class="b" style="left:36.00px;top:18.00px;" width="29" height="29" viewBox="0 0 29 29"><circle cx="14.400" cy="14.400" r="13.550" fill="#fff"/><g fill="none" stroke="#008aff" stroke-width="1.750" stroke-linejoin="round" stroke-linecap="round"><path d="M14.400 0.500V3.900"/><path d="M14.400 3.900L24.100 9.400L14.400 15.200L4.800 9.400Z"/><path d="M7.900 11.700L4.800 14.400L14.400 20.200L24.100 14.400L20.900 11.700"/><path d="M7.900 16.800L4.800 19.500L14.400 25.500L24.100 19.500L20.900 16.800"/><path d="M4.800 19.500L2.900 22"/><path d="M24.100 19.500L25.900 22"/></g></svg>
<span class="t" style="top:19.88px;font-size:24px;color:#ffffff;letter-spacing:-0.106px;left:88.50px;">StackState</span>
<svg class="b" style="left:429.00px;top:18.00px;" width="20" height="22" viewBox="0 0 20 22"><path d="M1.700 1.900l16.400 16.400M18.100 1.900l-16.400 16.400" stroke="#93cdff" stroke-width="1.700" fill="none"/></svg>
<svg class="b" style="left:36.10px;top:123.80px;" width="28" height="28" viewBox="0 0 28 28"><polygon points="14.00,1.70 23.85,6.44 26.28,17.10 19.47,25.65 8.53,25.65 1.72,17.10 4.15,6.44" fill="#326ce5" stroke="#326ce5" stroke-width="2.4" stroke-linejoin="round"/><circle cx="14" cy="14.300" r="6.500" fill="none" stroke="#fff" stroke-width="1.800"/><path d="M14 14.3L14.00 4.80" stroke="#fff" stroke-width="1.700" stroke-linecap="round"/><path d="M14 14.3L21.43 8.38" stroke="#fff" stroke-width="1.700" stroke-linecap="round"/><path d="M14 14.3L23.26 16.41" stroke="#fff" stroke-width="1.700" stroke-linecap="round"/><path d="M14 14.3L18.12 22.86" stroke="#fff" stroke-width="1.700" stroke-linecap="round"/><path d="M14 14.3L9.88 22.86" stroke="#fff" stroke-width="1.700" stroke-linecap="round"/><path d="M14 14.3L4.74 16.41" stroke="#fff" stroke-width="1.700" stroke-linecap="round"/><path d="M14 14.3L6.57 8.38" stroke="#fff" stroke-width="1.700" stroke-linecap="round"/><circle cx="14" cy="14.300" r="2.300" fill="#fff"/><circle cx="14" cy="14.100" r="0.700" fill="#326ce5"/></svg>
<span class="t" style="top:126.14px;font-size:22.4px;color:#2c2c2c;letter-spacing:-0.093px;left:88.70px;-webkit-text-stroke:0.5px #2c2c2c;">Kubernetes</span>
<svg class="b" style="left:429.00px;top:129.00px;" width="20" height="14" viewBox="0 0 20 14"><path d="M2.300 3.200l7.700 7.600l7.700-7.600" fill="none" stroke="#363636" stroke-width="2.800"/></svg>
<svg class="b" style="left:36.00px;top:173.10px;" width="29" height="29" viewBox="0 0 29 29"><polygon points="14.50,1.40 24.59,6.26 27.08,17.17 20.10,25.92 8.90,25.92 1.92,17.17 4.41,6.26" fill="#f4f4f4" stroke="#f4f4f4" stroke-width="2.4" stroke-linejoin="round"/><g transform="translate(0.5 0)"><rect x="10.6" y="7.7" width="7.4" height="2.9" fill="#326ce5"/><rect x="6.1" y="17.7" width="4.6" height="2.8" fill="#326ce5"/><rect x="12.0" y="17.7" width="4.6" height="2.8" fill="#326ce5"/><rect x="17.9" y="17.7" width="4.6" height="2.8" fill="#326ce5"/><path d="M14.3 10.500v4.300M8.400 17.800v-3.100h11.800v3.100M14.300 14.700v3.100" fill="none" stroke="#326ce5" stroke-width="1.3"/></g></svg>
<span class="t" style="top:176.07px;font-size:21.42px;color:#858585;left:88.20px;transform:scaleX(0.9549);transform-origin:0 0;">Services</span>
<svg class="b" style="left:36.00px;top:218.10px;" width="29" height="29" viewBox="0 0 29 29"><polygon points="14.50,1.40 24.59,6.26 27.08,17.17 20.10,25.92 8.90,25.92 1.92,17.17 4.41,6.26" fill="#f4f4f4" stroke="#f4f4f4" stroke-width="2.4" stroke-linejoin="round"/><g transform="translate(0.5 0)"><path d="M14.4 8.300l5.500 1.900l-5.500 2.100l-5.500-2.100z" fill="#326ce5"/><path d="M8.600 11.100l5.300 2.100v7l-5.300-2.900z" fill="#326ce5"/><path d="M20.200 11.100l-5.300 2.100v7l5.300-2.900z" fill="#326ce5"/></g></svg>
<span class="t" style="top:221.07px;font-size:21.42px;color:#858585;left:88.20px;transform:scaleX(0.9696);transform-origin:0 0;">Pods</span>
<svg class="b" style="left:36.00px;top:263.10px;" width="29" height="29" viewBox="0 0 29 29"><polygon points="14.50,1.40 24.59,6.26 27.08,17.17 20.10,25.92 8.90,25.92 1.92,17.17 4.41,6.26" fill="#f4f4f4" stroke="#f4f4f4" stroke-width="2.4" stroke-linejoin="round"/><g transform="translate(0.5 0)"><polygon points="14.20,6.30 20.53,9.35 22.10,16.20 17.71,21.70 10.69,21.70 6.30,16.20 7.87,9.35" fill="#326ce5" stroke="#326ce5" stroke-width="1.2" stroke-linejoin="round"/><g fill="none" stroke="#fff" stroke-width="1"><circle cx="10.600" cy="14.600" r="1.900"/><circle cx="15.600" cy="11.300" r="1.700"/><circle cx="16.200" cy="17.200" r="2.100"/></g></g></svg>
<span class="t" style="top:266.07px;font-size:21.42px;color:#858585;left:88.20px;transform:scaleX(0.9731);transform-origin:0 0;">Clusters</span>
<svg class="b" style="left:36.00px;top:308.10px;" width="29" height="29" viewBox="0 0 29 29"><polygon points="14.50,1.40 24.59,6.26 27.08,17.17 20.10,25.92 8.90,25.92 1.92,17.17 4.41,6.26" fill="#f4f4f4" stroke="#f4f4f4" stroke-width="2.4" stroke-linejoin="round"/><g transform="translate(0.5 0)"><rect x="8.200" y="8.400" width="12.400" height="11.800" fill="none" stroke="#326ce5" stroke-width="0.9" stroke-dasharray="1.2 0.7" opacity="0.8"/></g></svg>
<span class="t" style="top:311.07px;font-size:21.42px;color:#858585;left:88.20px;transform:scaleX(0.9749);transform-origin:0 0;">Namespaces</span>
<svg class="b" style="left:36.00px;top:353.10px;" width="29" height="29" viewBox="0 0 29 29"><polygon points="14.50,1.40 24.59,6.26 27.08,17.17 20.10,25.92 8.90,25.92 1.92,17.17 4.41,6.26" fill="#f4f4f4" stroke="#f4f4f4" stroke-width="2.4" stroke-linejoin="round"/><g transform="translate(0.5 0)"><path d="M18.900 14.400a4.700 4.700 0 1 0-2.300 4.300" fill="none" stroke="#326ce5" stroke-width="3.200"/><path d="M15.300 13.300h7.300l-3.650 4.700z" fill="#326ce5"/></g></svg>
<span class="t" style="top:356.07px;font-size:21.42px;color:#858585;left:88.20px;transform:scaleX(0.9705);transform-origin:0 0;">Deployments</span>
<svg class="b" style="left:36.00px;top:398.10px;" width="29" height="29" viewBox="0 0 29 29"><polygon points="14.50,1.40 24.59,6.26 27.08,17.17 20.10,25.92 8.90,25.92 1.92,17.17 4.41,6.26" fill="#f4f4f4" stroke="#f4f4f4" stroke-width="2.4" stroke-linejoin="round"/><g transform="translate(0.5 0)"><g fill="none" stroke="#326ce5" stroke-width="1.1" stroke-dasharray="1.6 1"><path d="M11.400 10.600v-2.300h11v6.700h-2.300"/><path d="M9.400 12.500v-2.200h11.200v6.800h-2.300"/></g><rect x="6.2" y="12.3" width="11.8" height="8.2" fill="#326ce5"/><rect x="8" y="14.800" width="8.200" height="3.300" rx="1.600" fill="#f3f3f3"/><rect x="9" y="15.700" width="6.200" height="1.500" rx="0.700" fill="#326ce5"/></g></svg>
<span class="t" style="top:401.07px;font-size:21.42px;color:#858585;left:88.20px;transform:scaleX(0.9786);transform-origin:0 0;">StatefulSets</span>
<svg class="b" style="left:36.00px;top:443.10px;" width="29" height="29" viewBox="0 0 29 29"><polygon points="14.50,1.40 24.59,6.26 27.08,17.17 20.10,25.92 8.90,25.92 1.92,17.17 4.41,6.26" fill="#f4f4f4" stroke="#f4f4f4" stroke-width="2.4" stroke-linejoin="round"/><g transform="translate(0.5 0)"><g fill="none" stroke="#326ce5" stroke-width="1.1" stroke-dasharray="1.6 1"><path d="M11.400 10.600v-2.300h11v6.700h-2.300"/><path d="M9.400 12.500v-2.200h11.200v6.800h-2.300"/></g><rect x="6.2" y="11.6" width="11.8" height="9.7" fill="#326ce5"/><rect x="6.200" y="20.300" width="11.800" height="1.100" fill="#2350b5"/></g></svg>
<span class="t" style="top:446.07px;font-size:21.42px;color:#858585;left:88.20px;transform:scaleX(0.9576);transform-origin:0 0;">DaemonSets</span>
<svg class="b" style="left:36.00px;top:488.10px;" width="29" height="29" viewBox="0 0 29 29"><polygon points="14.50,1.40 24.59,6.26 27.08,17.17 20.10,25.92 8.90,25.92 1.92,17.17 4.41,6.26" fill="#f4f4f4" stroke="#f4f4f4" stroke-width="2.4" stroke-linejoin="round"/><g transform="translate(0.5 0)"><rect x="8" y="8.6" width="1.9" height="1.5" fill="#326ce5"/><rect x="11.3" y="8.6" width="9.5" height="1.5" fill="#326ce5"/><rect x="8" y="11.649999999999999" width="1.9" height="1.5" fill="#326ce5"/><rect x="11.3" y="11.649999999999999" width="9.5" height="1.5" fill="#326ce5"/><rect x="8" y="14.7" width="1.9" height="1.5" fill="#326ce5"/><rect x="11.3" y="14.7" width="9.5" height="1.5" fill="#326ce5"/><rect x="8" y="17.75" width="1.9" height="1.5" fill="#326ce5"/><rect x="11.3" y="17.75" width="9.5" height="1.5" fill="#326ce5"/></g></svg>
<span class="t" style="top:491.07px;font-size:21.42px;color:#858585;left:88.20px;transform:scaleX(0.9802);transform-origin:0 0;">ConfigMaps</span>
<svg class="b" style="left:36.00px;top:533.10px;" width="29" height="29" viewBox="0 0 29 29"><polygon points="14.50,1.40 24.59,6.26 27.08,17.17 20.10,25.92 8.90,25.92 1.92,17.17 4.41,6.26" fill="#f4f4f4" stroke="#f4f4f4" stroke-width="2.4" stroke-linejoin="round"/><g transform="translate(0.5 0)"><rect x="8" y="8.4" width="1.7" height="1.4" fill="#326ce5"/><rect x="11" y="8.4" width="9.8" height="1.4" fill="#326ce5"/><rect x="8" y="12" width="1.7" height="1.4" fill="#326ce5"/><rect x="8" y="15.5" width="1.7" height="1.4" fill="#326ce5"/><rect x="8" y="19" width="1.7" height="1.4" fill="#326ce5"/><rect x="11" y="19" width="9.8" height="1.4" fill="#326ce5"/><rect x="11.2" y="12.7" width="7.8" height="5" fill="#326ce5"/><path d="M13.300 12.700v-1.300a1.900 1.900 0 0 1 3.800 0v1.300" fill="none" stroke="#326ce5" stroke-width="1.1"/><circle cx="15.200" cy="15.100" r="1" fill="#f3f3f3"/><rect x="19.8" y="12" width="1.4" height="1.4" fill="#326ce5"/><rect x="19.8" y="15.5" width="1.4" height="1.4" fill="#326ce5"/></g></svg>
<span class="t" style="top:536.07px;font-size:21.42px;color:#858585;left:88.20px;transform:scaleX(0.9602);transform-origin:0 0;">Secrets</span>
<svg class="b" style="left:36.00px;top:578.10px;" width="29" height="29" viewBox="0 0 29 29"><polygon points="14.50,1.40 24.59,6.26 27.08,17.17 20.10,25.92 8.90,25.92 1.92,17.17 4.41,6.26" fill="#f4f4f4" stroke="#f4f4f4" stroke-width="2.4" stroke-linejoin="round"/><g transform="translate(0.5 0)"><g fill="none" stroke="#326ce5" stroke-width="1.1"><path d="M6.800 11.700v5.400c0 1.500 3.300 2.700 7.400 2.700s7.400-1.200 7.400-2.700v-5.400" stroke-dasharray="2.200 0.900"/><ellipse cx="14.200" cy="11.700" rx="7.400" ry="2.600"/><path d="M6.800 14.500h14.800" stroke-dasharray="2 1.200"/></g></g></svg>
<span class="t" style="top:581.07px;font-size:21.42px;color:#858585;left:88.20px;transform:scaleX(0.9831);transform-origin:0 0;">PersistentVolumeClaims</span>
<svg class="b" style="left:36.00px;top:623.10px;" width="29" height="29" viewBox="0 0 29 29"><polygon points="14.50,1.40 24.59,6.26 27.08,17.17 20.10,25.92 8.90,25.92 1.92,17.17 4.41,6.26" fill="#f4f4f4" stroke="#f4f4f4" stroke-width="2.4" stroke-linejoin="round"/><g transform="translate(0.5 0)"><path d="M6.700 12.300v4.100c0 1.700 3.400 3 7.500 3s7.500-1.300 7.500-3v-4.100z" fill="#326ce5"/><ellipse cx="14.200" cy="12.300" rx="7.500" ry="2.700" fill="#326ce5"/><path d="M7.400 12.600c1.200 1.300 3.800 2 6.800 2s5.600-.7 6.800-2" fill="none" stroke="#7ea2f0" stroke-width="0.700"/></g></svg>
<span class="t" style="top:626.07px;font-size:21.42px;color:#858585;left:88.20px;transform:scaleX(0.9864);transform-origin:0 0;">PersistentVolumes</span>
<svg class="b" style="left:36.00px;top:668.10px;" width="29" height="29" viewBox="0 0 29 29"><polygon points="14.50,1.40 24.59,6.26 27.08,17.17 20.10,25.92 8.90,25.92 1.92,17.17 4.41,6.26" fill="#f4f4f4" stroke="#f4f4f4" stroke-width="2.4" stroke-linejoin="round"/><g transform="translate(0.5 0)"><polygon points="14.20,6.30 20.53,9.35 22.10,16.20 17.71,21.70 10.69,21.70 6.30,16.20 7.87,9.35" fill="#326ce5" stroke="#326ce5" stroke-width="1.2" stroke-linejoin="round"/><g fill="#fff"><circle cx="14.200" cy="10.200" r="1.500"/><circle cx="11.700" cy="13.400" r="1.300"/><circle cx="16.700" cy="13.400" r="1.300"/></g><g fill="none" stroke="#fff" stroke-width="0.9"><circle cx="12.300" cy="17.400" r="1.700"/><circle cx="16.100" cy="18.100" r="1.900"/></g></g></svg>
<span class="t" style="top:671.07px;font-size:21.42px;color:#858585;left:88.20px;transform:scaleX(0.9725);transform-origin:0 0;">Nodes</span>
<svg class="b" style="left:36.00px;top:713.10px;" width="29" height="29" viewBox="0 0 29 29"><polygon points="14.50,1.40 24.59,6.26 27.08,17.17 20.10,25.92 8.90,25.92 1.92,17.17 4.41,6.26" fill="#f4f4f4" stroke="#f4f4f4" stroke-width="2.4" stroke-linejoin="round"/><g transform="translate(0.5 0)"><rect x="7.4" y="12.0" width="3.1" height="3.1" fill="#326ce5"/><rect x="7.4" y="17.0" width="3.1" height="3.1" fill="#326ce5"/><rect x="12.4" y="12.0" width="3.1" height="3.1" fill="#326ce5"/><rect x="12.4" y="17.0" width="3.1" height="3.1" fill="#326ce5"/><rect x="17.5" y="12.0" width="3.1" height="3.1" fill="#326ce5"/><rect x="17.5" y="17.0" width="3.1" height="3.1" fill="#326ce5"/><rect x="17.5" y="7.0" width="3.1" height="3.1" fill="#326ce5"/></g></svg>
<span class="t" style="top:716.07px;font-size:21.42px;color:#858585;left:88.20px;transform:scaleX(1.0117);transform-origin:0 0;">Jobs</span>
<svg class="b" style="left:36.00px;top:758.10px;" width="29" height="29" viewBox="0 0 29 29"><polygon points="14.50,1.40 24.59,6.26 27.08,17.17 20.10,25.92 8.90,25.92 1.92,17.17 4.41,6.26" fill="#f4f4f4" stroke="#f4f4f4" stroke-width="2.4" stroke-linejoin="round"/><g transform="translate(0.5 0)"><rect x="5.5" y="9.9" width="3.6" height="3.6" fill="#326ce5"/><rect x="10.6" y="9.9" width="3.6" height="3.6" fill="#326ce5"/><rect x="5.5" y="14.9" width="3.6" height="3.6" fill="#326ce5"/><rect x="10.6" y="14.9" width="1.2" height="3.6" fill="#326ce5"/><rect x="15.5" y="5.1" width="3.8" height="3.4" fill="#326ce5"/><rect x="15.8" y="9.7" width="3.2" height="0.9" fill="#326ce5"/><circle cx="17.450" cy="16.500" r="5.200" fill="#f3f3f3"/><circle cx="17.450" cy="16.500" r="4.900" fill="#326ce5"/><path d="M17.100 14v2.700l2 1.500" fill="none" stroke="#f3f3f3" stroke-width="1"/></g></svg>
<span class="t" style="top:761.07px;font-size:21.42px;color:#858585;left:88.20px;transform:scaleX(0.9766);transform-origin:0 0;">CronJobs</span>
<svg class="b" style="left:35.00px;top:836.00px;" width="30" height="30" viewBox="0 0 30 30"><g fill="none" stroke="#2c2c2c" stroke-width="1.7" stroke-linejoin="round"><path d="M15.100 2l12.500 5.400v14.500l-12.500 5.700l-12.500-5.700v-14.500z"/><path d="M2.600 7.400l12.500 5.700l12.500-5.700"/><path d="M15.100 13.100v14.500"/></g></svg>
<span class="t" style="top:840.04px;font-size:22.4px;color:#2c2c2c;letter-spacing:0.194px;left:88.60px;-webkit-text-stroke:0.5px #2c2c2c;">Views</span>
<svg class="b" style="left:430.00px;top:840.00px;" width="16" height="22" viewBox="0 0 16 22"><path d="M3.400 2.600l8.400 8.400l-8.400 8.400" fill="none" stroke="#2c2c2c" stroke-width="2.6"/></svg>
<div class="b" style="left:2.00px;top:913.60px;width:479.00px;height:1.30px;background:#e9e9e9;"></div>
<span class="t" style="top:967.84px;font-size:22.4px;color:#383838;letter-spacing:0.492px;left:88.40px;-webkit-text-stroke:0.5px #383838;">Monitors</span>
<svg class="b" style="left:34.20px;top:963.20px;" width="32" height="32" viewBox="0 0 24 24"><g fill="none" stroke="#2f2f2f" stroke-width="1.35" stroke-linecap="round" stroke-linejoin="round"><path d="M3 12h4l3 8l4 -16l3 8h4"/></g></svg>
<span class="t" style="top:1021.74px;font-size:22.4px;color:#383838;letter-spacing:0.499px;left:88.40px;-webkit-text-stroke:0.5px #383838;">Notifications</span>
<svg class="b" style="left:31.90px;top:1013.90px;" width="37.2" height="37.2" viewBox="0 0 24 24"><g fill="none" stroke="#2f2f2f" stroke-width="1.25" stroke-linecap="round" stroke-linejoin="round"><path d="M10 5a2 2 0 1 1 4 0a7 7 0 0 1 4 6v3a4 4 0 0 0 2 3h-16a4 4 0 0 0 2 -3v-3a7 7 0 0 1 4 -6"/><path d="M9 17v1a3 3 0 0 0 6 0v-1"/></g></svg>
<span class="t" style="top:1075.34px;font-size:22.4px;color:#383838;letter-spacing:0.531px;left:88.40px;-webkit-text-stroke:0.5px #383838;">Metrics</span>
<svg class="b" style="left:34.20px;top:1070.70px;" width="32" height="32" viewBox="0 0 24 24"><g fill="none" stroke="#2f2f2f" stroke-width="1.35" stroke-linecap="round" stroke-linejoin="round"><path d="M3.200 3.200v17.600h17.600"/><path d="M6.800 15l4.600-5.400l3.400 3l5.800-6.200"/></g></svg>
<span class="t" style="top:1129.54px;font-size:22.4px;color:#383838;letter-spacing:-0.594px;left:88.40px;-webkit-text-stroke:0.5px #383838;">CLI</span>
<svg class="b" style="left:34.20px;top:1124.90px;" width="32" height="32" viewBox="0 0 24 24"><g fill="none" stroke="#2f2f2f" stroke-width="1.35" stroke-linecap="round" stroke-linejoin="round"><path d="M7.500 9.200l3 2.900l-3 2.900"/><path d="M12.800 15.200l3.200 0"/><rect x="2.900" y="4.700" width="18.300" height="14.700" rx="2"/></g></svg>
<span class="t" style="top:1183.44px;font-size:22.4px;color:#383838;letter-spacing:0.059px;left:88.40px;-webkit-text-stroke:0.5px #383838;">StackPacks</span>
<svg class="b" style="left:34.20px;top:1178.80px;" width="32" height="32" viewBox="0 0 24 24"><g fill="none" stroke="#2f2f2f" stroke-width="1.35" stroke-linecap="round" stroke-linejoin="round"><path d="M4 7h3a1 1 0 0 0 1 -1v-1a2 2 0 0 1 4 0v1a1 1 0 0 0 1 1h3a1 1 0 0 1 1 1v3a1 1 0 0 0 1 1h1a2 2 0 0 1 0 4h-1a1 1 0 0 0 -1 1v3a1 1 0 0 1 -1 1h-3a1 1 0 0 1 -1 -1v-1a2 2 0 0 0 -4 0v1a1 1 0 0 1 -1 1h-3a1 1 0 0 1 -1 -1v-3a1 1 0 0 1 1 -1h1a2 2 0 0 0 0 -4h-1a1 1 0 0 1 -1 -1v-3a1 1 0 0 1 1 -1"/></g></svg>
<span class="t" style="top:1237.34px;font-size:22.4px;color:#383838;letter-spacing:0.027px;left:88.40px;-webkit-text-stroke:0.5px #383838;">Help</span>
<svg class="b" style="left:34.20px;top:1232.70px;" width="32" height="32" viewBox="0 0 24 24"><g fill="none" stroke="#2f2f2f" stroke-width="1.35" stroke-linecap="round" stroke-linejoin="round"><path d="M12 12m-9 0a9 9 0 1 0 18 0a9 9 0 1 0 -18 0"/><path d="M12 17l0 .01"/><path d="M12 13.500a1.500 1.500 0 0 1 1 -1.500a2.600 2.600 0 1 0 -3 -4"/></g></svg>
<span class="t" style="top:1234.70px;font-size:17.6px;color:#bfbfbf;letter-spacing:0.128px;left:316.10px;">v6.0.0+7ba93b3</span>
</body></html>
